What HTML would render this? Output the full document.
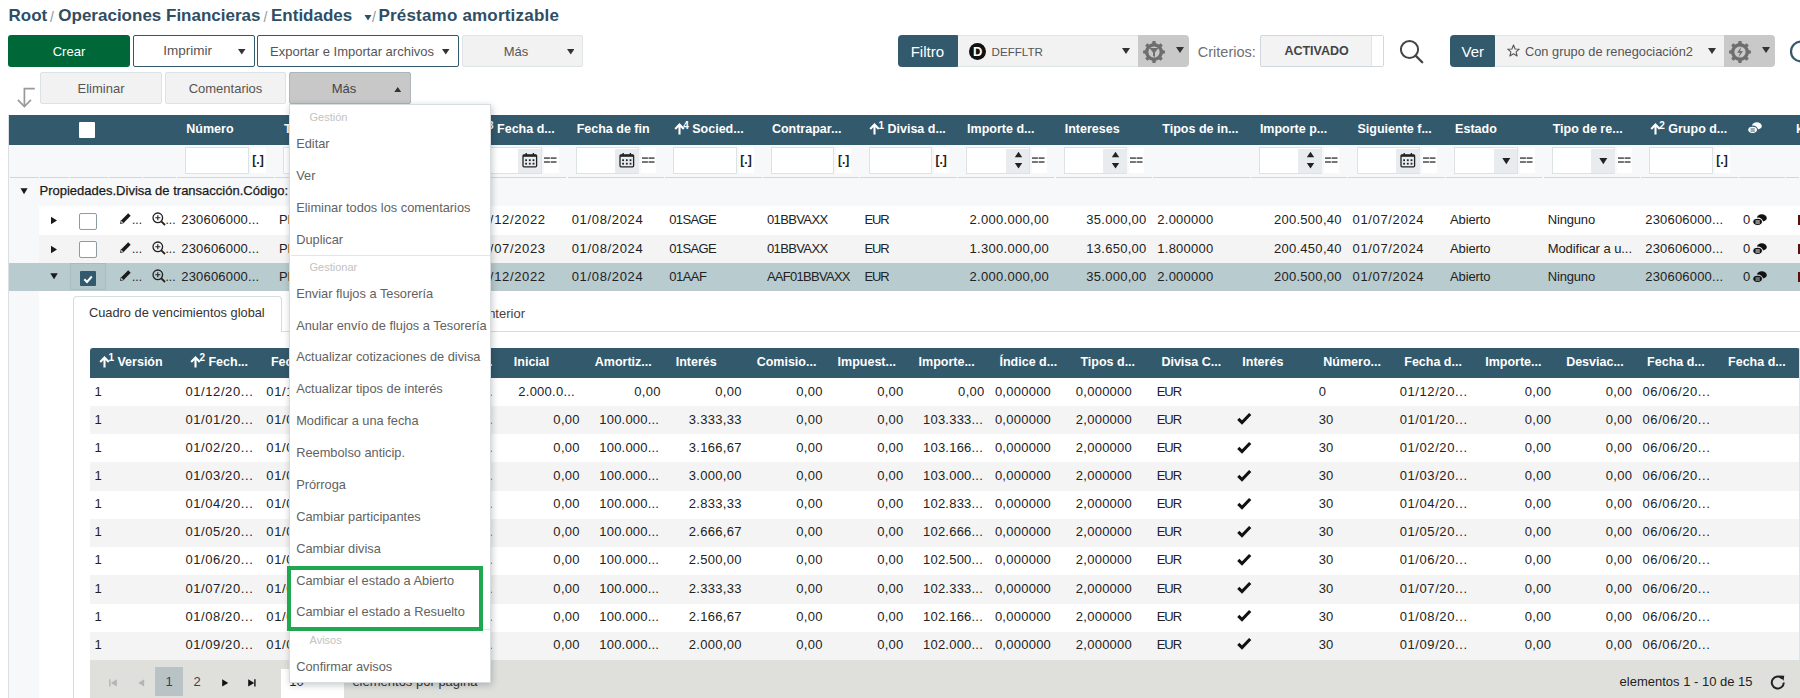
<!DOCTYPE html>
<html><head><meta charset="utf-8"><style>
html,body{margin:0;padding:0;}
body{width:1800px;height:698px;overflow:hidden;position:relative;background:#fff;font-family:"Liberation Sans", sans-serif;}
</style></head><body>
<div style="position:absolute;left:8.5px;top:7.11px;font-size:17px;line-height:17px;font-weight:bold;color:#2f4e63;white-space:pre;">Root</div>
<div style="position:absolute;left:50px;top:9.65px;font-size:14px;line-height:14px;font-weight:normal;color:#8a99a3;white-space:pre;">/</div>
<div style="position:absolute;left:58.3px;top:7.11px;font-size:17px;line-height:17px;font-weight:bold;color:#2f4e63;white-space:pre;">Operaciones Financieras</div>
<div style="position:absolute;left:263.5px;top:9.65px;font-size:14px;line-height:14px;font-weight:normal;color:#8a99a3;white-space:pre;">/</div>
<div style="position:absolute;left:271px;top:7.11px;font-size:17px;line-height:17px;font-weight:bold;color:#2f4e63;white-space:pre;">Entidades</div>
<svg style="position:absolute;left:364px;top:13.5px;" width="8" height="7" viewBox="0 0 8 7"><path d="M0.5 1 L7.5 1 L4 6.5 Z" fill="#2f4e63"/></svg>
<div style="position:absolute;left:372px;top:9.65px;font-size:14px;line-height:14px;font-weight:normal;color:#8a99a3;white-space:pre;">/</div>
<div style="position:absolute;left:378.4px;top:7.11px;font-size:17px;line-height:17px;font-weight:bold;color:#2f4e63;white-space:pre;letter-spacing:0.2px">Préstamo amortizable</div>
<div style="position:absolute;left:8px;top:35px;width:122px;height:32px;box-sizing:border-box;background:#006838;border:none;border-radius:3px"></div>
<div style="position:absolute;left:-131px;width:400px;top:44.50px;font-size:13px;line-height:13px;font-weight:normal;color:#fff;white-space:pre;text-align:center;">Crear</div>
<div style="position:absolute;left:133px;top:35px;width:121.5px;height:32px;box-sizing:border-box;background:#fff;border:1.5px solid #33596d;border-radius:2px"></div>
<div style="position:absolute;left:163.3px;top:44.07px;font-size:13.5px;line-height:13.5px;font-weight:normal;color:#555;white-space:pre;">Imprimir</div>
<svg style="position:absolute;left:238px;top:49px;" width="7.5" height="5.5" viewBox="0 0 7.5 5.5"><path d="M0 0 L7.5 0 L3.75 5.5 Z" fill="#333"/></svg>
<div style="position:absolute;left:257px;top:35px;width:202px;height:32px;box-sizing:border-box;background:#fff;border:1.5px solid #33596d;border-radius:2px"></div>
<div style="position:absolute;left:270px;top:44.50px;font-size:13px;line-height:13px;font-weight:normal;color:#555;white-space:pre;">Exportar e Importar archivos</div>
<svg style="position:absolute;left:442px;top:49px;" width="7.5" height="5.5" viewBox="0 0 7.5 5.5"><path d="M0 0 L7.5 0 L3.75 5.5 Z" fill="#333"/></svg>
<div style="position:absolute;left:462px;top:35px;width:121px;height:32px;box-sizing:border-box;background:#f2f2f2;border:1px solid #dfe4e6;border-radius:2px"></div>
<div style="position:absolute;left:316px;width:400px;top:44.50px;font-size:13px;line-height:13px;font-weight:normal;color:#555;white-space:pre;text-align:center;">Más</div>
<svg style="position:absolute;left:566.5px;top:49px;" width="7.5" height="5.5" viewBox="0 0 7.5 5.5"><path d="M0 0 L7.5 0 L3.75 5.5 Z" fill="#333"/></svg>
<div style="position:absolute;left:898px;top:35px;width:62px;height:32px;box-sizing:border-box;background:#33596d;border:none;border-radius:4px"></div>
<div style="position:absolute;left:910.7px;top:44.30px;font-size:15px;line-height:15px;font-weight:normal;color:#fff;white-space:pre;">Filtro</div>
<div style="position:absolute;left:958px;top:35px;width:181px;height:32px;box-sizing:border-box;background:#f2f2f2;border:1px solid #dfe4e6;border-left:none"></div>
<svg style="position:absolute;left:968px;top:42px;" width="19" height="19" viewBox="0 0 19 19"><circle cx="9.5" cy="9.5" r="8.5" fill="#111"/><text x="9.6" y="14.3" font-family="Liberation Sans" font-size="13" font-weight="bold" fill="#fff" text-anchor="middle">D</text></svg>
<div style="position:absolute;left:991.6px;top:46.48px;font-size:11.6px;line-height:11.6px;font-weight:normal;color:#555;white-space:pre;">DEFFLTR</div>
<svg style="position:absolute;left:1121.5px;top:48px;" width="8" height="6" viewBox="0 0 8 6"><path d="M0 0 L8 0 L4.0 6 Z" fill="#333"/></svg>
<div style="position:absolute;left:1138px;top:35px;width:51px;height:32px;box-sizing:border-box;background:#c9c9c9;border-radius:0 4px 4px 0"></div>
<svg style="position:absolute;left:1141px;top:39px;" width="26" height="26" viewBox="0 0 26 26"><path d="M21.10 11.19 L23.89 11.47 L23.89 14.53 L21.10 14.81 L20.01 17.45 L21.79 19.62 L19.62 21.79 L17.45 20.01 L14.81 21.10 L14.53 23.89 L11.47 23.89 L11.19 21.10 L8.55 20.01 L6.38 21.79 L4.21 19.62 L5.99 17.45 L4.90 14.81 L2.11 14.53 L2.11 11.47 L4.90 11.19 L5.99 8.55 L4.21 6.38 L6.38 4.21 L8.55 5.99 L11.19 4.90 L11.47 2.11 L14.53 2.11 L14.81 4.90 L17.45 5.99 L19.62 4.21 L21.79 6.38 L20.01 8.55 Z" fill="#6e6e6e"/><circle cx="13" cy="13" r="9" fill="#6e6e6e"/><circle cx="13" cy="13" r="5.6" fill="#c9c9c9"/><path d="M8.5 9 L17.5 9 L14 13.5 L14 18 L12 17 L12 13.5 Z" fill="#6e6e6e"/></svg>
<svg style="position:absolute;left:1176px;top:47px;" width="8" height="6" viewBox="0 0 8 6"><path d="M0 0 L8 0 L4.0 6 Z" fill="#333"/></svg>
<div style="position:absolute;left:1197.8px;top:44.73px;font-size:14.5px;line-height:14.5px;font-weight:normal;color:#707070;white-space:pre;">Criterios:</div>
<div style="position:absolute;left:1260px;top:35px;width:124px;height:32px;box-sizing:border-box;background:#f3f3f3;border:1px solid #cfd8dc;border-radius:2px"></div>
<div style="position:absolute;left:1371px;top:36px;width:11px;height:30px;background:#fff;border-left:1px solid #dfe4e6"></div>
<div style="position:absolute;left:1284.4px;top:45.22px;font-size:12.5px;line-height:12.5px;font-weight:bold;color:#444;white-space:pre;">ACTIVADO</div>
<svg style="position:absolute;left:1398px;top:38px;" width="28" height="28" viewBox="0 0 28 28"><circle cx="11.5" cy="11.5" r="8.6" fill="none" stroke="#444" stroke-width="2"/><path d="M17.6 17.6 L24.2 24.2" stroke="#444" stroke-width="2.3" stroke-linecap="round"/></svg>
<div style="position:absolute;left:1450px;top:35px;width:47px;height:32px;box-sizing:border-box;background:#33596d;border:none;border-radius:4px"></div>
<div style="position:absolute;left:1461.5px;top:44.30px;font-size:15px;line-height:15px;font-weight:normal;color:#fff;white-space:pre;">Ver</div>
<div style="position:absolute;left:1495px;top:35px;width:230px;height:32px;box-sizing:border-box;background:#f2f2f2;border:1px solid #dfe4e6;border-left:none"></div>
<svg style="position:absolute;left:1507px;top:44px;" width="14" height="14" viewBox="0 0 14 14"><path d="M6.5 1 L8.1 5 L12.3 5.2 L9.1 7.9 L10.1 12 L6.5 9.8 L2.9 12 L3.9 7.9 L0.7 5.2 L4.9 5 Z" fill="none" stroke="#555" stroke-width="1.1" stroke-linejoin="round"/></svg>
<div style="position:absolute;left:1525px;top:45.96px;font-size:12.8px;line-height:12.8px;font-weight:normal;color:#555;white-space:pre;">Con grupo de renegociación2</div>
<svg style="position:absolute;left:1708px;top:48px;" width="8" height="6" viewBox="0 0 8 6"><path d="M0 0 L8 0 L4.0 6 Z" fill="#333"/></svg>
<div style="position:absolute;left:1724px;top:35px;width:51px;height:32px;box-sizing:border-box;background:#c9c9c9;border-radius:0 4px 4px 0"></div>
<svg style="position:absolute;left:1727px;top:39px;" width="26" height="26" viewBox="0 0 26 26"><path d="M21.10 11.19 L23.89 11.47 L23.89 14.53 L21.10 14.81 L20.01 17.45 L21.79 19.62 L19.62 21.79 L17.45 20.01 L14.81 21.10 L14.53 23.89 L11.47 23.89 L11.19 21.10 L8.55 20.01 L6.38 21.79 L4.21 19.62 L5.99 17.45 L4.90 14.81 L2.11 14.53 L2.11 11.47 L4.90 11.19 L5.99 8.55 L4.21 6.38 L6.38 4.21 L8.55 5.99 L11.19 4.90 L11.47 2.11 L14.53 2.11 L14.81 4.90 L17.45 5.99 L19.62 4.21 L21.79 6.38 L20.01 8.55 Z" fill="#6e6e6e"/><circle cx="13" cy="13" r="9" fill="#6e6e6e"/><circle cx="13" cy="13" r="5.6" fill="#c9c9c9"/><path d="M14.5 7.5 L10 13.8 L13 13.8 L11.5 18.5 L16 12 L13 12 Z" fill="#6e6e6e"/></svg>
<svg style="position:absolute;left:1762px;top:47px;" width="8" height="6" viewBox="0 0 8 6"><path d="M0 0 L8 0 L4.0 6 Z" fill="#333"/></svg>
<svg style="position:absolute;left:1787.5px;top:40px;" width="13" height="24" viewBox="0 0 13 24"><circle cx="13" cy="11.5" r="10" fill="none" stroke="#33596d" stroke-width="2.2"/></svg>
<svg style="position:absolute;left:15px;top:85px;" width="22" height="24" viewBox="0 0 22 24"><path d="M19.8 3.7 L9.4 3.7 L9.4 21" fill="none" stroke="#999" stroke-width="1.7"/><path d="M2.9 14.8 L9.4 21.5 L15.9 14.8" fill="none" stroke="#999" stroke-width="1.7"/></svg>
<div style="position:absolute;left:40px;top:72px;width:122px;height:32px;box-sizing:border-box;background:#f2f2f2;border:1px solid #dbe3e6;border-radius:2px"></div>
<div style="position:absolute;left:-99px;width:400px;top:81.50px;font-size:13px;line-height:13px;font-weight:normal;color:#555;white-space:pre;text-align:center;">Eliminar</div>
<div style="position:absolute;left:165px;top:72px;width:121px;height:32px;box-sizing:border-box;background:#f2f2f2;border:1px solid #dbe3e6;border-radius:2px"></div>
<div style="position:absolute;left:25.5px;width:400px;top:81.50px;font-size:13px;line-height:13px;font-weight:normal;color:#555;white-space:pre;text-align:center;">Comentarios</div>
<div style="position:absolute;left:289px;top:72px;width:122px;height:32px;box-sizing:border-box;background:#c8c8c8;border:1px solid #aab6ba;border-radius:2px"></div>
<div style="position:absolute;left:144px;width:400px;top:81.50px;font-size:13px;line-height:13px;font-weight:normal;color:#444;white-space:pre;text-align:center;">Más</div>
<svg style="position:absolute;left:394.2px;top:86.5px;" width="7.5" height="5.5" viewBox="0 0 7.5 5.5"><path d="M0 5.5 L7.5 5.5 L3.75 0 Z" fill="#333"/></svg>
<!-- main table -->
<div style="position:absolute;left:8px;top:115px;width:1792px;height:1px;background:#dde3e6"></div>
<div style="position:absolute;left:8px;top:115px;width:1792px;height:30px;background:#33596d"></div>
<div style="position:absolute;left:8px;top:145px;width:1792px;height:33px;background:#f7f8fa"></div>
<div style="position:absolute;left:8px;top:178px;width:1792px;height:28px;background:#f7f8fa"></div>
<div style="position:absolute;left:9px;top:178px;width:30px;height:520px;background:#f7f8fa"></div>
<div style="position:absolute;left:8px;top:115px;width:1px;height:583px;background:#d9dfe3"></div>
<div style="position:absolute;left:9.5px;top:177px;width:29.299999999999997px;height:1px;background:#cfd8dc"></div>
<div style="position:absolute;left:39.8px;top:177px;width:29.400000000000006px;height:1px;background:#cfd8dc"></div>
<div style="position:absolute;left:70.2px;top:177px;width:37.599999999999994px;height:1px;background:#cfd8dc"></div>
<div style="position:absolute;left:108.8px;top:177px;width:33.2px;height:1px;background:#cfd8dc"></div>
<div style="position:absolute;left:143.0px;top:177px;width:32.80000000000001px;height:1px;background:#cfd8dc"></div>
<div style="position:absolute;left:176.8px;top:177px;width:96.89999999999998px;height:1px;background:#cfd8dc"></div>
<div style="position:absolute;left:274.7px;top:177px;width:96.60000000000002px;height:1px;background:#cfd8dc"></div>
<div style="position:absolute;left:372.3px;top:177px;width:96.59999999999997px;height:1px;background:#cfd8dc"></div>
<div style="position:absolute;left:469.9px;top:177px;width:96.60000000000002px;height:1px;background:#cfd8dc"></div>
<div style="position:absolute;left:567.5px;top:177px;width:96.60000000000002px;height:1px;background:#cfd8dc"></div>
<div style="position:absolute;left:665.1px;top:177px;width:96.60000000000002px;height:1px;background:#cfd8dc"></div>
<div style="position:absolute;left:762.7px;top:177px;width:96.59999999999991px;height:1px;background:#cfd8dc"></div>
<div style="position:absolute;left:860.3px;top:177px;width:96.60000000000002px;height:1px;background:#cfd8dc"></div>
<div style="position:absolute;left:957.9px;top:177px;width:96.60000000000002px;height:1px;background:#cfd8dc"></div>
<div style="position:absolute;left:1055.5px;top:177px;width:96.59999999999991px;height:1px;background:#cfd8dc"></div>
<div style="position:absolute;left:1153.1px;top:177px;width:96.60000000000014px;height:1px;background:#cfd8dc"></div>
<div style="position:absolute;left:1250.7px;top:177px;width:96.59999999999991px;height:1px;background:#cfd8dc"></div>
<div style="position:absolute;left:1348.3px;top:177px;width:96.60000000000014px;height:1px;background:#cfd8dc"></div>
<div style="position:absolute;left:1445.9px;top:177px;width:96.59999999999991px;height:1px;background:#cfd8dc"></div>
<div style="position:absolute;left:1543.5px;top:177px;width:96.59999999999991px;height:1px;background:#cfd8dc"></div>
<div style="position:absolute;left:1641.1px;top:177px;width:96.60000000000014px;height:1px;background:#cfd8dc"></div>
<div style="position:absolute;left:1738.7px;top:177px;width:46.399999999999864px;height:1px;background:#cfd8dc"></div>
<div style="position:absolute;left:1786.1px;top:177px;width:13.400000000000091px;height:1px;background:#cfd8dc"></div>
<div style="position:absolute;left:79px;top:122px;width:16px;height:16px;background:#fff;border-radius:1px"></div>
<div style="position:absolute;left:186.3px;top:123.22px;font-size:12.5px;line-height:12.5px;font-weight:bold;color:#fff;white-space:pre;">Número</div>
<div style="position:absolute;left:283.9px;top:123.22px;font-size:12.5px;line-height:12.5px;font-weight:bold;color:#fff;white-space:pre;">Tipo...</div>
<div style="position:absolute;left:381.5px;top:123.22px;font-size:12.5px;line-height:12.5px;font-weight:bold;color:#fff;white-space:pre;">Nombre...</div>
<svg style="position:absolute;left:478.59999999999997px;top:123.30000000000001px;" width="11" height="12" viewBox="0 0 11 12"><path d="M5.5 11.5 L5.5 2 M1.2 6 L5.5 1.5 L9.8 6" fill="none" stroke="#fff" stroke-width="2.1"/></svg>
<div style="position:absolute;left:488.09999999999997px;top:120.84px;font-size:10px;line-height:10px;font-weight:bold;color:#fff;white-space:pre;">3</div>
<div style="position:absolute;left:493.59999999999997px;top:123.22px;font-size:12.5px;line-height:12.5px;font-weight:bold;color:#fff;white-space:pre;"> Fecha d...</div>
<div style="position:absolute;left:576.7px;top:123.22px;font-size:12.5px;line-height:12.5px;font-weight:bold;color:#fff;white-space:pre;">Fecha de fin</div>
<svg style="position:absolute;left:673.8px;top:123.30000000000001px;" width="11" height="12" viewBox="0 0 11 12"><path d="M5.5 11.5 L5.5 2 M1.2 6 L5.5 1.5 L9.8 6" fill="none" stroke="#fff" stroke-width="2.1"/></svg>
<div style="position:absolute;left:683.3px;top:120.84px;font-size:10px;line-height:10px;font-weight:bold;color:#fff;white-space:pre;">4</div>
<div style="position:absolute;left:688.8px;top:123.22px;font-size:12.5px;line-height:12.5px;font-weight:bold;color:#fff;white-space:pre;"> Socied...</div>
<div style="position:absolute;left:771.8999999999999px;top:123.22px;font-size:12.5px;line-height:12.5px;font-weight:bold;color:#fff;white-space:pre;">Contrapar...</div>
<svg style="position:absolute;left:869.0px;top:123.30000000000001px;" width="11" height="12" viewBox="0 0 11 12"><path d="M5.5 11.5 L5.5 2 M1.2 6 L5.5 1.5 L9.8 6" fill="none" stroke="#fff" stroke-width="2.1"/></svg>
<div style="position:absolute;left:878.5px;top:120.84px;font-size:10px;line-height:10px;font-weight:bold;color:#fff;white-space:pre;">1</div>
<div style="position:absolute;left:884.0px;top:123.22px;font-size:12.5px;line-height:12.5px;font-weight:bold;color:#fff;white-space:pre;"> Divisa d...</div>
<div style="position:absolute;left:967.0999999999999px;top:123.22px;font-size:12.5px;line-height:12.5px;font-weight:bold;color:#fff;white-space:pre;">Importe d...</div>
<div style="position:absolute;left:1064.7px;top:123.22px;font-size:12.5px;line-height:12.5px;font-weight:bold;color:#fff;white-space:pre;">Intereses</div>
<div style="position:absolute;left:1162.3px;top:123.22px;font-size:12.5px;line-height:12.5px;font-weight:bold;color:#fff;white-space:pre;">Tipos de in...</div>
<div style="position:absolute;left:1259.8999999999999px;top:123.22px;font-size:12.5px;line-height:12.5px;font-weight:bold;color:#fff;white-space:pre;">Importe p...</div>
<div style="position:absolute;left:1357.4999999999998px;top:123.22px;font-size:12.5px;line-height:12.5px;font-weight:bold;color:#fff;white-space:pre;">Siguiente f...</div>
<div style="position:absolute;left:1455.1px;top:123.22px;font-size:12.5px;line-height:12.5px;font-weight:bold;color:#fff;white-space:pre;">Estado</div>
<div style="position:absolute;left:1552.6999999999998px;top:123.22px;font-size:12.5px;line-height:12.5px;font-weight:bold;color:#fff;white-space:pre;">Tipo de re...</div>
<svg style="position:absolute;left:1649.8px;top:123.30000000000001px;" width="11" height="12" viewBox="0 0 11 12"><path d="M5.5 11.5 L5.5 2 M1.2 6 L5.5 1.5 L9.8 6" fill="none" stroke="#fff" stroke-width="2.1"/></svg>
<div style="position:absolute;left:1659.3px;top:120.84px;font-size:10px;line-height:10px;font-weight:bold;color:#fff;white-space:pre;">2</div>
<div style="position:absolute;left:1664.8px;top:123.22px;font-size:12.5px;line-height:12.5px;font-weight:bold;color:#fff;white-space:pre;"> Grupo d...</div>
<svg style="position:absolute;left:1747px;top:121px;" width="16" height="14" viewBox="0 0 16 14"><ellipse cx="9.8" cy="5" rx="5" ry="3.7" fill="#fff"/><ellipse cx="5.6" cy="8.8" rx="4.9" ry="3.7" fill="#fff" stroke="#33596d" stroke-width="1.1"/><path d="M3.5 8 L7.8 8 M3.5 10 L7.8 10" stroke="#33596d" stroke-width="1"/></svg>
<div style="position:absolute;left:1796px;top:123.22px;font-size:12.5px;line-height:12.5px;font-weight:bold;color:#fff;white-space:pre;">k</div>
<div style="position:absolute;left:185.3px;top:147px;width:63.5px;height:26.8px;box-sizing:border-box;background:#fff;border:1px solid #dde2e5"></div>
<div style="position:absolute;left:250.8px;top:148px;width:15px;height:25px;background:#fff"></div>
<div style="position:absolute;left:252.3px;top:153.64px;font-size:12px;line-height:12px;font-weight:bold;color:#222;white-space:pre;">[.]</div>
<div style="position:absolute;left:282.9px;top:147px;width:63.5px;height:26.8px;box-sizing:border-box;background:#fff;border:1px solid #dde2e5"></div>
<div style="position:absolute;left:348.4px;top:148px;width:15px;height:25px;background:#fff"></div>
<div style="position:absolute;left:349.9px;top:153.64px;font-size:12px;line-height:12px;font-weight:bold;color:#222;white-space:pre;">[.]</div>
<div style="position:absolute;left:380.5px;top:147px;width:63.5px;height:26.8px;box-sizing:border-box;background:#fff;border:1px solid #dde2e5"></div>
<div style="position:absolute;left:446.0px;top:148px;width:15px;height:25px;background:#fff"></div>
<div style="position:absolute;left:447.5px;top:153.64px;font-size:12px;line-height:12px;font-weight:bold;color:#222;white-space:pre;">[.]</div>
<div style="position:absolute;left:478.09999999999997px;top:147px;width:63.5px;height:26.8px;box-sizing:border-box;background:#fff;border:1px solid #dde2e5"></div>
<div style="position:absolute;left:517.5999999999999px;top:148.5px;width:23.5px;height:24px;background:#e9ecee"></div>
<svg style="position:absolute;left:521.5999999999999px;top:152px;" width="16" height="16" viewBox="0 0 16 16"><rect x="1" y="2.8" width="13.6" height="12" rx="1" fill="none" stroke="#222" stroke-width="1.3"/><rect x="1" y="2.8" width="13.6" height="2" fill="#222"/><path d="M4.2 1 L4.2 4 M11.4 1 L11.4 4" stroke="#222" stroke-width="1.4"/><g fill="#222"><rect x="3.2" y="7.3" width="1.8" height="1.8"/><rect x="6.9" y="7.3" width="1.8" height="1.8"/><rect x="10.6" y="7.3" width="1.8" height="1.8"/><rect x="3.2" y="10.8" width="1.8" height="1.8"/><rect x="6.9" y="10.8" width="1.8" height="1.8"/><rect x="10.6" y="10.8" width="1.8" height="1.8"/></g></svg>
<div style="position:absolute;left:543.5999999999999px;top:148px;width:15px;height:25px;background:#fff"></div>
<svg style="position:absolute;left:544.3999999999999px;top:156px;" width="13" height="9" viewBox="0 0 13 9"><g fill="#555"><rect x="0" y="1.3" width="5.9" height="1.6"/><rect x="6.6" y="1.3" width="5.9" height="1.6"/><rect x="0" y="5.2" width="5.9" height="1.6"/><rect x="6.6" y="5.2" width="5.9" height="1.6"/></g></svg>
<div style="position:absolute;left:575.7px;top:147px;width:63.5px;height:26.8px;box-sizing:border-box;background:#fff;border:1px solid #dde2e5"></div>
<div style="position:absolute;left:615.2px;top:148.5px;width:23.5px;height:24px;background:#e9ecee"></div>
<svg style="position:absolute;left:619.2px;top:152px;" width="16" height="16" viewBox="0 0 16 16"><rect x="1" y="2.8" width="13.6" height="12" rx="1" fill="none" stroke="#222" stroke-width="1.3"/><rect x="1" y="2.8" width="13.6" height="2" fill="#222"/><path d="M4.2 1 L4.2 4 M11.4 1 L11.4 4" stroke="#222" stroke-width="1.4"/><g fill="#222"><rect x="3.2" y="7.3" width="1.8" height="1.8"/><rect x="6.9" y="7.3" width="1.8" height="1.8"/><rect x="10.6" y="7.3" width="1.8" height="1.8"/><rect x="3.2" y="10.8" width="1.8" height="1.8"/><rect x="6.9" y="10.8" width="1.8" height="1.8"/><rect x="10.6" y="10.8" width="1.8" height="1.8"/></g></svg>
<div style="position:absolute;left:641.2px;top:148px;width:15px;height:25px;background:#fff"></div>
<svg style="position:absolute;left:642.0px;top:156px;" width="13" height="9" viewBox="0 0 13 9"><g fill="#555"><rect x="0" y="1.3" width="5.9" height="1.6"/><rect x="6.6" y="1.3" width="5.9" height="1.6"/><rect x="0" y="5.2" width="5.9" height="1.6"/><rect x="6.6" y="5.2" width="5.9" height="1.6"/></g></svg>
<div style="position:absolute;left:673.3px;top:147px;width:63.5px;height:26.8px;box-sizing:border-box;background:#fff;border:1px solid #dde2e5"></div>
<div style="position:absolute;left:738.8px;top:148px;width:15px;height:25px;background:#fff"></div>
<div style="position:absolute;left:740.3px;top:153.64px;font-size:12px;line-height:12px;font-weight:bold;color:#222;white-space:pre;">[.]</div>
<div style="position:absolute;left:770.8999999999999px;top:147px;width:63.5px;height:26.8px;box-sizing:border-box;background:#fff;border:1px solid #dde2e5"></div>
<div style="position:absolute;left:836.3999999999999px;top:148px;width:15px;height:25px;background:#fff"></div>
<div style="position:absolute;left:837.8999999999999px;top:153.64px;font-size:12px;line-height:12px;font-weight:bold;color:#222;white-space:pre;">[.]</div>
<div style="position:absolute;left:868.5px;top:147px;width:63.5px;height:26.8px;box-sizing:border-box;background:#fff;border:1px solid #dde2e5"></div>
<div style="position:absolute;left:934.0px;top:148px;width:15px;height:25px;background:#fff"></div>
<div style="position:absolute;left:935.5px;top:153.64px;font-size:12px;line-height:12px;font-weight:bold;color:#222;white-space:pre;">[.]</div>
<div style="position:absolute;left:966.0999999999999px;top:147px;width:63.5px;height:26.8px;box-sizing:border-box;background:#fff;border:1px solid #dde2e5"></div>
<div style="position:absolute;left:1005.5999999999999px;top:148.5px;width:23.5px;height:24px;background:#e9ecee"></div>
<svg style="position:absolute;left:1013.5999999999999px;top:151px;" width="9" height="19" viewBox="0 0 9 19"><path d="M0.8 6.3 L8.2 6.3 L4.5 0.8 Z M0.8 12 L8.2 12 L4.5 17.5 Z" fill="#222"/></svg>
<div style="position:absolute;left:1031.6px;top:148px;width:15px;height:25px;background:#fff"></div>
<svg style="position:absolute;left:1032.3999999999999px;top:156px;" width="13" height="9" viewBox="0 0 13 9"><g fill="#555"><rect x="0" y="1.3" width="5.9" height="1.6"/><rect x="6.6" y="1.3" width="5.9" height="1.6"/><rect x="0" y="5.2" width="5.9" height="1.6"/><rect x="6.6" y="5.2" width="5.9" height="1.6"/></g></svg>
<div style="position:absolute;left:1063.7px;top:147px;width:63.5px;height:26.8px;box-sizing:border-box;background:#fff;border:1px solid #dde2e5"></div>
<div style="position:absolute;left:1103.2px;top:148.5px;width:23.5px;height:24px;background:#e9ecee"></div>
<svg style="position:absolute;left:1111.2px;top:151px;" width="9" height="19" viewBox="0 0 9 19"><path d="M0.8 6.3 L8.2 6.3 L4.5 0.8 Z M0.8 12 L8.2 12 L4.5 17.5 Z" fill="#222"/></svg>
<div style="position:absolute;left:1129.2px;top:148px;width:15px;height:25px;background:#fff"></div>
<svg style="position:absolute;left:1130.0px;top:156px;" width="13" height="9" viewBox="0 0 13 9"><g fill="#555"><rect x="0" y="1.3" width="5.9" height="1.6"/><rect x="6.6" y="1.3" width="5.9" height="1.6"/><rect x="0" y="5.2" width="5.9" height="1.6"/><rect x="6.6" y="5.2" width="5.9" height="1.6"/></g></svg>
<div style="position:absolute;left:1258.8999999999999px;top:147px;width:63.5px;height:26.8px;box-sizing:border-box;background:#fff;border:1px solid #dde2e5"></div>
<div style="position:absolute;left:1298.3999999999999px;top:148.5px;width:23.5px;height:24px;background:#e9ecee"></div>
<svg style="position:absolute;left:1306.3999999999999px;top:151px;" width="9" height="19" viewBox="0 0 9 19"><path d="M0.8 6.3 L8.2 6.3 L4.5 0.8 Z M0.8 12 L8.2 12 L4.5 17.5 Z" fill="#222"/></svg>
<div style="position:absolute;left:1324.3999999999999px;top:148px;width:15px;height:25px;background:#fff"></div>
<svg style="position:absolute;left:1325.1999999999998px;top:156px;" width="13" height="9" viewBox="0 0 13 9"><g fill="#555"><rect x="0" y="1.3" width="5.9" height="1.6"/><rect x="6.6" y="1.3" width="5.9" height="1.6"/><rect x="0" y="5.2" width="5.9" height="1.6"/><rect x="6.6" y="5.2" width="5.9" height="1.6"/></g></svg>
<div style="position:absolute;left:1356.4999999999998px;top:147px;width:63.5px;height:26.8px;box-sizing:border-box;background:#fff;border:1px solid #dde2e5"></div>
<div style="position:absolute;left:1395.9999999999998px;top:148.5px;width:23.5px;height:24px;background:#e9ecee"></div>
<svg style="position:absolute;left:1399.9999999999998px;top:152px;" width="16" height="16" viewBox="0 0 16 16"><rect x="1" y="2.8" width="13.6" height="12" rx="1" fill="none" stroke="#222" stroke-width="1.3"/><rect x="1" y="2.8" width="13.6" height="2" fill="#222"/><path d="M4.2 1 L4.2 4 M11.4 1 L11.4 4" stroke="#222" stroke-width="1.4"/><g fill="#222"><rect x="3.2" y="7.3" width="1.8" height="1.8"/><rect x="6.9" y="7.3" width="1.8" height="1.8"/><rect x="10.6" y="7.3" width="1.8" height="1.8"/><rect x="3.2" y="10.8" width="1.8" height="1.8"/><rect x="6.9" y="10.8" width="1.8" height="1.8"/><rect x="10.6" y="10.8" width="1.8" height="1.8"/></g></svg>
<div style="position:absolute;left:1421.9999999999998px;top:148px;width:15px;height:25px;background:#fff"></div>
<svg style="position:absolute;left:1422.7999999999997px;top:156px;" width="13" height="9" viewBox="0 0 13 9"><g fill="#555"><rect x="0" y="1.3" width="5.9" height="1.6"/><rect x="6.6" y="1.3" width="5.9" height="1.6"/><rect x="0" y="5.2" width="5.9" height="1.6"/><rect x="6.6" y="5.2" width="5.9" height="1.6"/></g></svg>
<div style="position:absolute;left:1454.1px;top:147px;width:63.5px;height:26.8px;box-sizing:border-box;background:#fff;border:1px solid #dde2e5"></div>
<div style="position:absolute;left:1493.6px;top:148.5px;width:23.5px;height:24px;background:#e9ecee"></div>
<svg style="position:absolute;left:1501.6px;top:157.5px;" width="9" height="7" viewBox="0 0 9 7"><path d="M0.3 0 L8.3 0 L4.3 6.3 Z" fill="#222"/></svg>
<div style="position:absolute;left:1519.6px;top:148px;width:15px;height:25px;background:#fff"></div>
<svg style="position:absolute;left:1520.3999999999999px;top:156px;" width="13" height="9" viewBox="0 0 13 9"><g fill="#555"><rect x="0" y="1.3" width="5.9" height="1.6"/><rect x="6.6" y="1.3" width="5.9" height="1.6"/><rect x="0" y="5.2" width="5.9" height="1.6"/><rect x="6.6" y="5.2" width="5.9" height="1.6"/></g></svg>
<div style="position:absolute;left:1551.6999999999998px;top:147px;width:63.5px;height:26.8px;box-sizing:border-box;background:#fff;border:1px solid #dde2e5"></div>
<div style="position:absolute;left:1591.1999999999998px;top:148.5px;width:23.5px;height:24px;background:#e9ecee"></div>
<svg style="position:absolute;left:1599.1999999999998px;top:157.5px;" width="9" height="7" viewBox="0 0 9 7"><path d="M0.3 0 L8.3 0 L4.3 6.3 Z" fill="#222"/></svg>
<div style="position:absolute;left:1617.1999999999998px;top:148px;width:15px;height:25px;background:#fff"></div>
<svg style="position:absolute;left:1617.9999999999998px;top:156px;" width="13" height="9" viewBox="0 0 13 9"><g fill="#555"><rect x="0" y="1.3" width="5.9" height="1.6"/><rect x="6.6" y="1.3" width="5.9" height="1.6"/><rect x="0" y="5.2" width="5.9" height="1.6"/><rect x="6.6" y="5.2" width="5.9" height="1.6"/></g></svg>
<div style="position:absolute;left:1649.3px;top:147px;width:63.5px;height:26.8px;box-sizing:border-box;background:#fff;border:1px solid #dde2e5"></div>
<div style="position:absolute;left:1714.8px;top:148px;width:15px;height:25px;background:#fff"></div>
<div style="position:absolute;left:1716.3px;top:153.64px;font-size:12px;line-height:12px;font-weight:bold;color:#222;white-space:pre;">[.]</div>
<svg style="position:absolute;left:20px;top:188px;" width="8" height="7" viewBox="0 0 8 7"><path d="M0.5 0.3 L7.6 0.3 L4.05 6.2 Z" fill="#1a1a1a"/></svg>
<div style="position:absolute;left:39.5px;top:183.80px;font-size:13px;line-height:13px;font-weight:normal;color:#1a1a1a;white-space:pre;-webkit-text-stroke:0.25px #1a1a1a">Propiedades.Divisa de transacción.Código:</div>
<div style="position:absolute;left:39px;top:205.8px;width:1761px;height:29px;background:#fff"></div>
<svg style="position:absolute;left:50px;top:216.3px;" width="8" height="9" viewBox="0 0 8 9"><path d="M1 0.8 L7 4.55 L1 8.3 Z" fill="#1a1a1a"/></svg>
<div style="position:absolute;left:79px;top:213px;width:18px;height:17px;box-sizing:border-box;background:#fff;border:1.3px solid #8d9ca3;border-radius:2px"></div>
<svg style="position:absolute;left:119px;top:212.3px;" width="13" height="13" viewBox="0 0 13 13"><path d="M1.5 11.5 L2.3 8.2 L9.2 1.3 L11.7 3.8 L4.8 10.7 Z" fill="#1a1a1a"/><path d="M1.5 11.5 L2.3 8.2 L4.8 10.7 Z" fill="#fff" stroke="#1a1a1a" stroke-width="0.8"/></svg>
<div style="position:absolute;left:132px;top:214.14px;font-size:12px;line-height:12px;font-weight:normal;color:#222;white-space:pre;">...</div>
<svg style="position:absolute;left:151.5px;top:212.3px;" width="14" height="14" viewBox="0 0 14 14"><circle cx="5.8" cy="5.8" r="4.8" fill="none" stroke="#222" stroke-width="1.3"/><path d="M9.3 9.3 L13 13" stroke="#222" stroke-width="1.8"/><path d="M3.3 5.8 L8.3 5.8 M5.8 3.3 L5.8 8.3" stroke="#222" stroke-width="1.1"/></svg>
<div style="position:absolute;left:165.5px;top:214.14px;font-size:12px;line-height:12px;font-weight:normal;color:#222;white-space:pre;">...</div>
<div style="position:absolute;left:181.3px;top:213.30px;font-size:13px;line-height:13px;font-weight:normal;color:#222;white-space:pre;letter-spacing:0.179px">230606000...</div>
<div style="position:absolute;left:278.9px;top:213.30px;font-size:13px;line-height:13px;font-weight:normal;color:#222;white-space:pre;letter-spacing:-0.046px">PF...</div>
<div style="position:absolute;left:474.09999999999997px;top:213.30px;font-size:13px;line-height:13px;font-weight:normal;color:#222;white-space:pre;letter-spacing:0.660px">01/12/2022</div>
<div style="position:absolute;left:571.7px;top:213.30px;font-size:13px;line-height:13px;font-weight:normal;color:#222;white-space:pre;letter-spacing:0.660px">01/08/2024</div>
<div style="position:absolute;left:669.3px;top:213.30px;font-size:13px;line-height:13px;font-weight:normal;color:#222;white-space:pre;letter-spacing:-0.655px">01SAGE</div>
<div style="position:absolute;left:766.8999999999999px;top:213.30px;font-size:13px;line-height:13px;font-weight:normal;color:#222;white-space:pre;letter-spacing:-0.609px">01BBVAXX</div>
<div style="position:absolute;left:864.5px;top:213.30px;font-size:13px;line-height:13px;font-weight:normal;color:#222;white-space:pre;letter-spacing:-1.098px">EUR</div>
<div style="position:absolute;right:751.0081921875001px;top:213.30px;font-size:13px;line-height:13px;font-weight:normal;color:#222;white-space:pre;text-align:right;letter-spacing:0.292px">2.000.000,00</div>
<div style="position:absolute;right:653.4181229166668px;top:213.30px;font-size:13px;line-height:13px;font-weight:normal;color:#222;white-space:pre;text-align:right;letter-spacing:0.282px">35.000,00</div>
<div style="position:absolute;left:1157.3px;top:213.30px;font-size:13px;line-height:13px;font-weight:normal;color:#222;white-space:pre;letter-spacing:0.247px">2.000000</div>
<div style="position:absolute;right:458.2260675000002px;top:213.30px;font-size:13px;line-height:13px;font-weight:normal;color:#222;white-space:pre;text-align:right;letter-spacing:0.274px">200.500,40</div>
<div style="position:absolute;left:1352.4999999999998px;top:213.30px;font-size:13px;line-height:13px;font-weight:normal;color:#222;white-space:pre;letter-spacing:0.660px">01/07/2024</div>
<div style="position:absolute;left:1450.1px;top:213.30px;font-size:13px;line-height:13px;font-weight:normal;color:#222;white-space:pre;letter-spacing:-0.149px">Abierto</div>
<div style="position:absolute;left:1547.6999999999998px;top:213.30px;font-size:13px;line-height:13px;font-weight:normal;color:#222;white-space:pre;letter-spacing:-0.161px">Ninguno</div>
<div style="position:absolute;left:1645.3px;top:213.30px;font-size:13px;line-height:13px;font-weight:normal;color:#222;white-space:pre;letter-spacing:0.179px">230606000...</div>
<div style="position:absolute;left:1743px;top:213.30px;font-size:13px;line-height:13px;font-weight:normal;color:#222;white-space:pre;">0</div>
<svg style="position:absolute;left:1752px;top:213.3px;" width="16" height="14" viewBox="0 0 16 14"><ellipse cx="9.8" cy="5" rx="5" ry="3.7" fill="#111"/><ellipse cx="5.6" cy="8.8" rx="4.9" ry="3.7" fill="#111" stroke="#fff" stroke-width="1.1"/><path d="M3.5 8 L7.8 8 M3.5 10 L7.8 10" stroke="#fff" stroke-width="1"/></svg>
<div style="position:absolute;left:1798.3px;top:214.8px;width:1.7px;height:10px;background:#5a1010"></div>
<div style="position:absolute;left:39px;top:234.8px;width:1761px;height:27.9px;background:#f4f4f4"></div>
<svg style="position:absolute;left:50px;top:245.2px;" width="8" height="9" viewBox="0 0 8 9"><path d="M1 0.8 L7 4.55 L1 8.3 Z" fill="#1a1a1a"/></svg>
<div style="position:absolute;left:79px;top:241px;width:18px;height:17px;box-sizing:border-box;background:#fff;border:1.3px solid #8d9ca3;border-radius:2px"></div>
<svg style="position:absolute;left:119px;top:241.2px;" width="13" height="13" viewBox="0 0 13 13"><path d="M1.5 11.5 L2.3 8.2 L9.2 1.3 L11.7 3.8 L4.8 10.7 Z" fill="#1a1a1a"/><path d="M1.5 11.5 L2.3 8.2 L4.8 10.7 Z" fill="#fff" stroke="#1a1a1a" stroke-width="0.8"/></svg>
<div style="position:absolute;left:132px;top:243.04px;font-size:12px;line-height:12px;font-weight:normal;color:#222;white-space:pre;">...</div>
<svg style="position:absolute;left:151.5px;top:241.2px;" width="14" height="14" viewBox="0 0 14 14"><circle cx="5.8" cy="5.8" r="4.8" fill="none" stroke="#222" stroke-width="1.3"/><path d="M9.3 9.3 L13 13" stroke="#222" stroke-width="1.8"/><path d="M3.3 5.8 L8.3 5.8 M5.8 3.3 L5.8 8.3" stroke="#222" stroke-width="1.1"/></svg>
<div style="position:absolute;left:165.5px;top:243.04px;font-size:12px;line-height:12px;font-weight:normal;color:#222;white-space:pre;">...</div>
<div style="position:absolute;left:181.3px;top:242.20px;font-size:13px;line-height:13px;font-weight:normal;color:#222;white-space:pre;letter-spacing:0.179px">230606000...</div>
<div style="position:absolute;left:278.9px;top:242.20px;font-size:13px;line-height:13px;font-weight:normal;color:#222;white-space:pre;letter-spacing:-0.046px">PF...</div>
<div style="position:absolute;left:474.09999999999997px;top:242.20px;font-size:13px;line-height:13px;font-weight:normal;color:#222;white-space:pre;letter-spacing:0.660px">01/07/2023</div>
<div style="position:absolute;left:571.7px;top:242.20px;font-size:13px;line-height:13px;font-weight:normal;color:#222;white-space:pre;letter-spacing:0.660px">01/08/2024</div>
<div style="position:absolute;left:669.3px;top:242.20px;font-size:13px;line-height:13px;font-weight:normal;color:#222;white-space:pre;letter-spacing:-0.655px">01SAGE</div>
<div style="position:absolute;left:766.8999999999999px;top:242.20px;font-size:13px;line-height:13px;font-weight:normal;color:#222;white-space:pre;letter-spacing:-0.609px">01BBVAXX</div>
<div style="position:absolute;left:864.5px;top:242.20px;font-size:13px;line-height:13px;font-weight:normal;color:#222;white-space:pre;letter-spacing:-1.098px">EUR</div>
<div style="position:absolute;right:751.0081921875001px;top:242.20px;font-size:13px;line-height:13px;font-weight:normal;color:#222;white-space:pre;text-align:right;letter-spacing:0.292px">1.300.000,00</div>
<div style="position:absolute;right:653.4181229166668px;top:242.20px;font-size:13px;line-height:13px;font-weight:normal;color:#222;white-space:pre;text-align:right;letter-spacing:0.282px">13.650,00</div>
<div style="position:absolute;left:1157.3px;top:242.20px;font-size:13px;line-height:13px;font-weight:normal;color:#222;white-space:pre;letter-spacing:0.247px">1.800000</div>
<div style="position:absolute;right:458.2260675000002px;top:242.20px;font-size:13px;line-height:13px;font-weight:normal;color:#222;white-space:pre;text-align:right;letter-spacing:0.274px">200.450,40</div>
<div style="position:absolute;left:1352.4999999999998px;top:242.20px;font-size:13px;line-height:13px;font-weight:normal;color:#222;white-space:pre;letter-spacing:0.660px">01/07/2024</div>
<div style="position:absolute;left:1450.1px;top:242.20px;font-size:13px;line-height:13px;font-weight:normal;color:#222;white-space:pre;letter-spacing:-0.149px">Abierto</div>
<div style="position:absolute;left:1547.6999999999998px;top:242.20px;font-size:13px;line-height:13px;font-weight:normal;color:#222;white-space:pre;letter-spacing:-0.061px">Modificar a u...</div>
<div style="position:absolute;left:1645.3px;top:242.20px;font-size:13px;line-height:13px;font-weight:normal;color:#222;white-space:pre;letter-spacing:0.179px">230606000...</div>
<div style="position:absolute;left:1743px;top:242.20px;font-size:13px;line-height:13px;font-weight:normal;color:#222;white-space:pre;">0</div>
<svg style="position:absolute;left:1752px;top:242.2px;" width="16" height="14" viewBox="0 0 16 14"><ellipse cx="9.8" cy="5" rx="5" ry="3.7" fill="#111"/><ellipse cx="5.6" cy="8.8" rx="4.9" ry="3.7" fill="#111" stroke="#f4f4f4" stroke-width="1.1"/><path d="M3.5 8 L7.8 8 M3.5 10 L7.8 10" stroke="#f4f4f4" stroke-width="1"/></svg>
<div style="position:absolute;left:1798.3px;top:243.7px;width:1.7px;height:10px;background:#5a1010"></div>
<div style="position:absolute;left:9px;top:262.7px;width:1791px;height:28px;background:#b8cbcf"></div>
<svg style="position:absolute;left:50px;top:273px;" width="8" height="7" viewBox="0 0 8 7"><path d="M0.3 0.2 L7.8 0.2 L4.05 6.2 Z" fill="#1a1a1a"/></svg>
<div style="position:absolute;left:70.3px;top:263.4px;width:35.6px;height:26.8px;box-sizing:border-box;border:1px solid #a9bdc1;background:#b4c7cb"></div>
<div style="position:absolute;left:79.6px;top:270.5px;width:16.6px;height:15.8px;background:#33596d;border-radius:1px"></div>
<svg style="position:absolute;left:82px;top:272.5px;" width="12" height="12" viewBox="0 0 12 12"><path d="M2.3 6.3 L5 9 L9.8 3.5" fill="none" stroke="#fff" stroke-width="2"/></svg>
<svg style="position:absolute;left:119px;top:269.2px;" width="13" height="13" viewBox="0 0 13 13"><path d="M1.5 11.5 L2.3 8.2 L9.2 1.3 L11.7 3.8 L4.8 10.7 Z" fill="#1a1a1a"/><path d="M1.5 11.5 L2.3 8.2 L4.8 10.7 Z" fill="#fff" stroke="#1a1a1a" stroke-width="0.8"/></svg>
<div style="position:absolute;left:132px;top:271.04px;font-size:12px;line-height:12px;font-weight:normal;color:#222;white-space:pre;">...</div>
<svg style="position:absolute;left:151.5px;top:269.2px;" width="14" height="14" viewBox="0 0 14 14"><circle cx="5.8" cy="5.8" r="4.8" fill="none" stroke="#222" stroke-width="1.3"/><path d="M9.3 9.3 L13 13" stroke="#222" stroke-width="1.8"/><path d="M3.3 5.8 L8.3 5.8 M5.8 3.3 L5.8 8.3" stroke="#222" stroke-width="1.1"/></svg>
<div style="position:absolute;left:165.5px;top:271.04px;font-size:12px;line-height:12px;font-weight:normal;color:#222;white-space:pre;">...</div>
<div style="position:absolute;left:181.3px;top:270.20px;font-size:13px;line-height:13px;font-weight:normal;color:#222;white-space:pre;letter-spacing:0.179px">230606000...</div>
<div style="position:absolute;left:278.9px;top:270.20px;font-size:13px;line-height:13px;font-weight:normal;color:#222;white-space:pre;letter-spacing:-0.046px">PF...</div>
<div style="position:absolute;left:474.09999999999997px;top:270.20px;font-size:13px;line-height:13px;font-weight:normal;color:#222;white-space:pre;letter-spacing:0.660px">01/12/2022</div>
<div style="position:absolute;left:571.7px;top:270.20px;font-size:13px;line-height:13px;font-weight:normal;color:#222;white-space:pre;letter-spacing:0.660px">01/08/2024</div>
<div style="position:absolute;left:669.3px;top:270.20px;font-size:13px;line-height:13px;font-weight:normal;color:#222;white-space:pre;letter-spacing:-0.526px">01AAF</div>
<div style="position:absolute;left:766.8999999999999px;top:270.20px;font-size:13px;line-height:13px;font-weight:normal;color:#222;white-space:pre;letter-spacing:-0.719px">AAF01BBVAXX</div>
<div style="position:absolute;left:864.5px;top:270.20px;font-size:13px;line-height:13px;font-weight:normal;color:#222;white-space:pre;letter-spacing:-1.098px">EUR</div>
<div style="position:absolute;right:751.0081921875001px;top:270.20px;font-size:13px;line-height:13px;font-weight:normal;color:#222;white-space:pre;text-align:right;letter-spacing:0.292px">2.000.000,00</div>
<div style="position:absolute;right:653.4181229166668px;top:270.20px;font-size:13px;line-height:13px;font-weight:normal;color:#222;white-space:pre;text-align:right;letter-spacing:0.282px">35.000,00</div>
<div style="position:absolute;left:1157.3px;top:270.20px;font-size:13px;line-height:13px;font-weight:normal;color:#222;white-space:pre;letter-spacing:0.247px">2.000000</div>
<div style="position:absolute;right:458.2260675000002px;top:270.20px;font-size:13px;line-height:13px;font-weight:normal;color:#222;white-space:pre;text-align:right;letter-spacing:0.274px">200.500,00</div>
<div style="position:absolute;left:1352.4999999999998px;top:270.20px;font-size:13px;line-height:13px;font-weight:normal;color:#222;white-space:pre;letter-spacing:0.660px">01/07/2024</div>
<div style="position:absolute;left:1450.1px;top:270.20px;font-size:13px;line-height:13px;font-weight:normal;color:#222;white-space:pre;letter-spacing:-0.149px">Abierto</div>
<div style="position:absolute;left:1547.6999999999998px;top:270.20px;font-size:13px;line-height:13px;font-weight:normal;color:#222;white-space:pre;letter-spacing:-0.161px">Ninguno</div>
<div style="position:absolute;left:1645.3px;top:270.20px;font-size:13px;line-height:13px;font-weight:normal;color:#222;white-space:pre;letter-spacing:0.179px">230606000...</div>
<div style="position:absolute;left:1743px;top:270.20px;font-size:13px;line-height:13px;font-weight:normal;color:#222;white-space:pre;">0</div>
<svg style="position:absolute;left:1752px;top:270.2px;" width="16" height="14" viewBox="0 0 16 14"><ellipse cx="9.8" cy="5" rx="5" ry="3.7" fill="#111"/><ellipse cx="5.6" cy="8.8" rx="4.9" ry="3.7" fill="#111" stroke="#b8cbcf" stroke-width="1.1"/><path d="M3.5 8 L7.8 8 M3.5 10 L7.8 10" stroke="#b8cbcf" stroke-width="1"/></svg>
<div style="position:absolute;left:1798.3px;top:271.7px;width:1.7px;height:10px;background:#5a1010"></div>
<!-- detail -->
<div style="position:absolute;left:39px;top:291px;width:1761px;height:407px;background:#fff"></div>
<div style="position:absolute;left:9px;top:291px;width:30px;height:407px;background:#f7f8fa"></div>
<div style="position:absolute;left:73px;top:310px;width:1px;height:388px;background:#d5dde1"></div>
<div style="position:absolute;left:73.5px;top:330.5px;width:1726.5px;height:1px;background:#d5dde1"></div>
<div style="position:absolute;left:73px;top:295.5px;width:208.5px;height:36px;box-sizing:border-box;background:#fff;border:1px solid #d5dde1;border-bottom:none;border-radius:4px 4px 0 0"></div>
<div style="position:absolute;left:89px;top:306.96px;font-size:12.8px;line-height:12.8px;font-weight:normal;color:#333;white-space:pre;">Cuadro de vencimientos global</div>
<div style="position:absolute;right:1275px;top:307.00px;font-size:13px;line-height:13px;font-weight:normal;color:#444;white-space:pre;text-align:right;">Cuadro de vencimientos anterior</div>
<div style="position:absolute;left:90px;top:348px;width:1709.5px;height:29.5px;background:#33596d;border-radius:3px 3px 0 0"></div>
<svg style="position:absolute;left:99px;top:355.8px;" width="11" height="12" viewBox="0 0 11 12"><path d="M5.5 11.5 L5.5 2 M1.2 6 L5.5 1.5 L9.8 6" fill="none" stroke="#fff" stroke-width="2.1"/></svg>
<div style="position:absolute;left:108.5px;top:353.34px;font-size:10px;line-height:10px;font-weight:bold;color:#fff;white-space:pre;">1</div>
<div style="position:absolute;left:114px;top:355.72px;font-size:12.5px;line-height:12.5px;font-weight:bold;color:#fff;white-space:pre;"> Versión</div>
<svg style="position:absolute;left:190.0px;top:355.8px;" width="11" height="12" viewBox="0 0 11 12"><path d="M5.5 11.5 L5.5 2 M1.2 6 L5.5 1.5 L9.8 6" fill="none" stroke="#fff" stroke-width="2.1"/></svg>
<div style="position:absolute;left:199.5px;top:353.34px;font-size:10px;line-height:10px;font-weight:bold;color:#fff;white-space:pre;">2</div>
<div style="position:absolute;left:205.0px;top:355.72px;font-size:12.5px;line-height:12.5px;font-weight:bold;color:#fff;white-space:pre;"> Fech...</div>
<div style="position:absolute;left:270.95px;top:355.72px;font-size:12.5px;line-height:12.5px;font-weight:bold;color:#fff;white-space:pre;">Fecha d...</div>
<div style="position:absolute;left:351.9px;top:355.72px;font-size:12.5px;line-height:12.5px;font-weight:bold;color:#fff;white-space:pre;">Fecha d...</div>
<div style="position:absolute;right:1307.5px;top:355.72px;font-size:12.5px;line-height:12.5px;font-weight:bold;color:#fff;white-space:pre;text-align:right;">Importe...</div>
<div style="position:absolute;left:513.8px;top:355.72px;font-size:12.5px;line-height:12.5px;font-weight:bold;color:#fff;white-space:pre;">Inicial</div>
<div style="position:absolute;left:594.75px;top:355.72px;font-size:12.5px;line-height:12.5px;font-weight:bold;color:#fff;white-space:pre;">Amortiz...</div>
<div style="position:absolute;left:675.7px;top:355.72px;font-size:12.5px;line-height:12.5px;font-weight:bold;color:#fff;white-space:pre;">Interés</div>
<div style="position:absolute;left:756.65px;top:355.72px;font-size:12.5px;line-height:12.5px;font-weight:bold;color:#fff;white-space:pre;">Comisio...</div>
<div style="position:absolute;left:837.6px;top:355.72px;font-size:12.5px;line-height:12.5px;font-weight:bold;color:#fff;white-space:pre;">Impuest...</div>
<div style="position:absolute;left:918.5500000000001px;top:355.72px;font-size:12.5px;line-height:12.5px;font-weight:bold;color:#fff;white-space:pre;">Importe...</div>
<div style="position:absolute;left:999.5px;top:355.72px;font-size:12.5px;line-height:12.5px;font-weight:bold;color:#fff;white-space:pre;">Índice d...</div>
<div style="position:absolute;left:1080.45px;top:355.72px;font-size:12.5px;line-height:12.5px;font-weight:bold;color:#fff;white-space:pre;">Tipos d...</div>
<div style="position:absolute;left:1161.4px;top:355.72px;font-size:12.5px;line-height:12.5px;font-weight:bold;color:#fff;white-space:pre;">Divisa C...</div>
<div style="position:absolute;left:1242.3500000000001px;top:355.72px;font-size:12.5px;line-height:12.5px;font-weight:bold;color:#fff;white-space:pre;">Interés</div>
<div style="position:absolute;left:1323.3px;top:355.72px;font-size:12.5px;line-height:12.5px;font-weight:bold;color:#fff;white-space:pre;">Número...</div>
<div style="position:absolute;left:1404.25px;top:355.72px;font-size:12.5px;line-height:12.5px;font-weight:bold;color:#fff;white-space:pre;">Fecha d...</div>
<div style="position:absolute;left:1485.2px;top:355.72px;font-size:12.5px;line-height:12.5px;font-weight:bold;color:#fff;white-space:pre;">Importe...</div>
<div style="position:absolute;left:1566.15px;top:355.72px;font-size:12.5px;line-height:12.5px;font-weight:bold;color:#fff;white-space:pre;">Desviac...</div>
<div style="position:absolute;left:1647.1000000000001px;top:355.72px;font-size:12.5px;line-height:12.5px;font-weight:bold;color:#fff;white-space:pre;">Fecha d...</div>
<div style="position:absolute;left:1728.05px;top:355.72px;font-size:12.5px;line-height:12.5px;font-weight:bold;color:#fff;white-space:pre;">Fecha d...</div>
<div style="position:absolute;left:90px;top:377.6px;width:1708.5px;height:28.74px;background:#fff"></div>
<div style="position:absolute;left:94.4px;top:384.80px;font-size:13px;line-height:13px;font-weight:normal;color:#222;white-space:pre;letter-spacing:0.202px">1</div>
<div style="position:absolute;left:185.4px;top:384.80px;font-size:13px;line-height:13px;font-weight:normal;color:#222;white-space:pre;letter-spacing:0.593px">01/12/20...</div>
<div style="position:absolute;left:266.34999999999997px;top:384.80px;font-size:13px;line-height:13px;font-weight:normal;color:#222;white-space:pre;letter-spacing:0.593px">01/12/20...</div>
<div style="position:absolute;left:347.29999999999995px;top:384.80px;font-size:13px;line-height:13px;font-weight:normal;color:#222;white-space:pre;letter-spacing:0.593px">01/12/20...</div>
<div style="position:absolute;right:1307.236772596154px;top:384.80px;font-size:13px;line-height:13px;font-weight:normal;color:#222;white-space:pre;text-align:right;letter-spacing:0.263px">2.000.000,...</div>
<div style="position:absolute;left:518.3px;top:384.80px;font-size:13px;line-height:13px;font-weight:normal;color:#222;white-space:pre;letter-spacing:0.246px">2.000.0...</div>
<div style="position:absolute;right:1139.2081921875001px;top:384.80px;font-size:13px;line-height:13px;font-weight:normal;color:#222;white-space:pre;text-align:right;letter-spacing:0.292px">0,00</div>
<div style="position:absolute;right:1058.2581921875px;top:384.80px;font-size:13px;line-height:13px;font-weight:normal;color:#222;white-space:pre;text-align:right;letter-spacing:0.292px">0,00</div>
<div style="position:absolute;right:977.3081921875px;top:384.80px;font-size:13px;line-height:13px;font-weight:normal;color:#222;white-space:pre;text-align:right;letter-spacing:0.292px">0,00</div>
<div style="position:absolute;right:896.3581921875px;top:384.80px;font-size:13px;line-height:13px;font-weight:normal;color:#222;white-space:pre;text-align:right;letter-spacing:0.292px">0,00</div>
<div style="position:absolute;right:815.4081921875px;top:384.80px;font-size:13px;line-height:13px;font-weight:normal;color:#222;white-space:pre;text-align:right;letter-spacing:0.292px">0,00</div>
<div style="position:absolute;left:994.9px;top:384.80px;font-size:13px;line-height:13px;font-weight:normal;color:#222;white-space:pre;letter-spacing:0.247px">0,000000</div>
<div style="position:absolute;left:1075.8500000000001px;top:384.80px;font-size:13px;line-height:13px;font-weight:normal;color:#222;white-space:pre;letter-spacing:0.247px">0,000000</div>
<div style="position:absolute;left:1156.8000000000002px;top:384.80px;font-size:13px;line-height:13px;font-weight:normal;color:#222;white-space:pre;letter-spacing:-1.098px">EUR</div>
<div style="position:absolute;left:1318.7px;top:384.80px;font-size:13px;line-height:13px;font-weight:normal;color:#222;white-space:pre;letter-spacing:0.202px">0</div>
<div style="position:absolute;left:1399.65px;top:384.80px;font-size:13px;line-height:13px;font-weight:normal;color:#222;white-space:pre;letter-spacing:0.593px">01/12/20...</div>
<div style="position:absolute;right:248.75819218749984px;top:384.80px;font-size:13px;line-height:13px;font-weight:normal;color:#222;white-space:pre;text-align:right;letter-spacing:0.292px">0,00</div>
<div style="position:absolute;right:167.8081921874998px;top:384.80px;font-size:13px;line-height:13px;font-weight:normal;color:#222;white-space:pre;text-align:right;letter-spacing:0.292px">0,00</div>
<div style="position:absolute;left:1642.5000000000002px;top:384.80px;font-size:13px;line-height:13px;font-weight:normal;color:#222;white-space:pre;letter-spacing:0.593px">06/06/20...</div>
<div style="position:absolute;left:90px;top:405.84000000000003px;width:1708.5px;height:28.74px;background:#f4f4f4"></div>
<div style="position:absolute;left:94.4px;top:412.90px;font-size:13px;line-height:13px;font-weight:normal;color:#222;white-space:pre;letter-spacing:0.202px">1</div>
<div style="position:absolute;left:185.4px;top:412.90px;font-size:13px;line-height:13px;font-weight:normal;color:#222;white-space:pre;letter-spacing:0.593px">01/01/20...</div>
<div style="position:absolute;left:266.34999999999997px;top:412.90px;font-size:13px;line-height:13px;font-weight:normal;color:#222;white-space:pre;letter-spacing:0.593px">01/01/20...</div>
<div style="position:absolute;left:347.29999999999995px;top:412.90px;font-size:13px;line-height:13px;font-weight:normal;color:#222;white-space:pre;letter-spacing:0.593px">01/12/20...</div>
<div style="position:absolute;right:1307.236772596154px;top:412.90px;font-size:13px;line-height:13px;font-weight:normal;color:#222;white-space:pre;text-align:right;letter-spacing:0.263px">2.000.000,...</div>
<div style="position:absolute;right:1220.1581921875px;top:412.90px;font-size:13px;line-height:13px;font-weight:normal;color:#222;white-space:pre;text-align:right;letter-spacing:0.292px">0,00</div>
<div style="position:absolute;left:599.25px;top:412.90px;font-size:13px;line-height:13px;font-weight:normal;color:#222;white-space:pre;letter-spacing:0.210px">100.000...</div>
<div style="position:absolute;right:1058.2581921875px;top:412.90px;font-size:13px;line-height:13px;font-weight:normal;color:#222;white-space:pre;text-align:right;letter-spacing:0.292px">3.333,33</div>
<div style="position:absolute;right:977.3081921875px;top:412.90px;font-size:13px;line-height:13px;font-weight:normal;color:#222;white-space:pre;text-align:right;letter-spacing:0.292px">0,00</div>
<div style="position:absolute;right:896.3581921875px;top:412.90px;font-size:13px;line-height:13px;font-weight:normal;color:#222;white-space:pre;text-align:right;letter-spacing:0.292px">0,00</div>
<div style="position:absolute;left:923.0500000000001px;top:412.90px;font-size:13px;line-height:13px;font-weight:normal;color:#222;white-space:pre;letter-spacing:0.210px">103.333...</div>
<div style="position:absolute;left:994.9px;top:412.90px;font-size:13px;line-height:13px;font-weight:normal;color:#222;white-space:pre;letter-spacing:0.247px">0,000000</div>
<div style="position:absolute;left:1075.8500000000001px;top:412.90px;font-size:13px;line-height:13px;font-weight:normal;color:#222;white-space:pre;letter-spacing:0.247px">2,000000</div>
<div style="position:absolute;left:1156.8000000000002px;top:412.90px;font-size:13px;line-height:13px;font-weight:normal;color:#222;white-space:pre;letter-spacing:-1.098px">EUR</div>
<div style="position:absolute;left:1318.7px;top:412.90px;font-size:13px;line-height:13px;font-weight:normal;color:#222;white-space:pre;letter-spacing:0.202px">30</div>
<div style="position:absolute;left:1399.65px;top:412.90px;font-size:13px;line-height:13px;font-weight:normal;color:#222;white-space:pre;letter-spacing:0.593px">01/01/20...</div>
<div style="position:absolute;right:248.75819218749984px;top:412.90px;font-size:13px;line-height:13px;font-weight:normal;color:#222;white-space:pre;text-align:right;letter-spacing:0.292px">0,00</div>
<div style="position:absolute;right:167.8081921874998px;top:412.90px;font-size:13px;line-height:13px;font-weight:normal;color:#222;white-space:pre;text-align:right;letter-spacing:0.292px">0,00</div>
<div style="position:absolute;left:1642.5000000000002px;top:412.90px;font-size:13px;line-height:13px;font-weight:normal;color:#222;white-space:pre;letter-spacing:0.593px">06/06/20...</div>
<svg style="position:absolute;left:1236.5px;top:412.40000000000003px;" width="15" height="13" viewBox="0 0 15 13"><path d="M1.3 6.8 L5 10.5 L13.2 2" fill="none" stroke="#111" stroke-width="3.1"/></svg>
<div style="position:absolute;left:90px;top:434.08000000000004px;width:1708.5px;height:28.74px;background:#fff"></div>
<div style="position:absolute;left:94.4px;top:441.00px;font-size:13px;line-height:13px;font-weight:normal;color:#222;white-space:pre;letter-spacing:0.202px">1</div>
<div style="position:absolute;left:185.4px;top:441.00px;font-size:13px;line-height:13px;font-weight:normal;color:#222;white-space:pre;letter-spacing:0.593px">01/02/20...</div>
<div style="position:absolute;left:266.34999999999997px;top:441.00px;font-size:13px;line-height:13px;font-weight:normal;color:#222;white-space:pre;letter-spacing:0.593px">01/02/20...</div>
<div style="position:absolute;left:347.29999999999995px;top:441.00px;font-size:13px;line-height:13px;font-weight:normal;color:#222;white-space:pre;letter-spacing:0.593px">01/12/20...</div>
<div style="position:absolute;right:1307.236772596154px;top:441.00px;font-size:13px;line-height:13px;font-weight:normal;color:#222;white-space:pre;text-align:right;letter-spacing:0.263px">2.000.000,...</div>
<div style="position:absolute;right:1220.1581921875px;top:441.00px;font-size:13px;line-height:13px;font-weight:normal;color:#222;white-space:pre;text-align:right;letter-spacing:0.292px">0,00</div>
<div style="position:absolute;left:599.25px;top:441.00px;font-size:13px;line-height:13px;font-weight:normal;color:#222;white-space:pre;letter-spacing:0.210px">100.000...</div>
<div style="position:absolute;right:1058.2581921875px;top:441.00px;font-size:13px;line-height:13px;font-weight:normal;color:#222;white-space:pre;text-align:right;letter-spacing:0.292px">3.166,67</div>
<div style="position:absolute;right:977.3081921875px;top:441.00px;font-size:13px;line-height:13px;font-weight:normal;color:#222;white-space:pre;text-align:right;letter-spacing:0.292px">0,00</div>
<div style="position:absolute;right:896.3581921875px;top:441.00px;font-size:13px;line-height:13px;font-weight:normal;color:#222;white-space:pre;text-align:right;letter-spacing:0.292px">0,00</div>
<div style="position:absolute;left:923.0500000000001px;top:441.00px;font-size:13px;line-height:13px;font-weight:normal;color:#222;white-space:pre;letter-spacing:0.210px">103.166...</div>
<div style="position:absolute;left:994.9px;top:441.00px;font-size:13px;line-height:13px;font-weight:normal;color:#222;white-space:pre;letter-spacing:0.247px">0,000000</div>
<div style="position:absolute;left:1075.8500000000001px;top:441.00px;font-size:13px;line-height:13px;font-weight:normal;color:#222;white-space:pre;letter-spacing:0.247px">2,000000</div>
<div style="position:absolute;left:1156.8000000000002px;top:441.00px;font-size:13px;line-height:13px;font-weight:normal;color:#222;white-space:pre;letter-spacing:-1.098px">EUR</div>
<div style="position:absolute;left:1318.7px;top:441.00px;font-size:13px;line-height:13px;font-weight:normal;color:#222;white-space:pre;letter-spacing:0.202px">30</div>
<div style="position:absolute;left:1399.65px;top:441.00px;font-size:13px;line-height:13px;font-weight:normal;color:#222;white-space:pre;letter-spacing:0.593px">01/02/20...</div>
<div style="position:absolute;right:248.75819218749984px;top:441.00px;font-size:13px;line-height:13px;font-weight:normal;color:#222;white-space:pre;text-align:right;letter-spacing:0.292px">0,00</div>
<div style="position:absolute;right:167.8081921874998px;top:441.00px;font-size:13px;line-height:13px;font-weight:normal;color:#222;white-space:pre;text-align:right;letter-spacing:0.292px">0,00</div>
<div style="position:absolute;left:1642.5000000000002px;top:441.00px;font-size:13px;line-height:13px;font-weight:normal;color:#222;white-space:pre;letter-spacing:0.593px">06/06/20...</div>
<svg style="position:absolute;left:1236.5px;top:440.5px;" width="15" height="13" viewBox="0 0 15 13"><path d="M1.3 6.8 L5 10.5 L13.2 2" fill="none" stroke="#111" stroke-width="3.1"/></svg>
<div style="position:absolute;left:90px;top:462.32000000000005px;width:1708.5px;height:28.74px;background:#f4f4f4"></div>
<div style="position:absolute;left:94.4px;top:469.10px;font-size:13px;line-height:13px;font-weight:normal;color:#222;white-space:pre;letter-spacing:0.202px">1</div>
<div style="position:absolute;left:185.4px;top:469.10px;font-size:13px;line-height:13px;font-weight:normal;color:#222;white-space:pre;letter-spacing:0.593px">01/03/20...</div>
<div style="position:absolute;left:266.34999999999997px;top:469.10px;font-size:13px;line-height:13px;font-weight:normal;color:#222;white-space:pre;letter-spacing:0.593px">01/03/20...</div>
<div style="position:absolute;left:347.29999999999995px;top:469.10px;font-size:13px;line-height:13px;font-weight:normal;color:#222;white-space:pre;letter-spacing:0.593px">01/12/20...</div>
<div style="position:absolute;right:1307.236772596154px;top:469.10px;font-size:13px;line-height:13px;font-weight:normal;color:#222;white-space:pre;text-align:right;letter-spacing:0.263px">2.000.000,...</div>
<div style="position:absolute;right:1220.1581921875px;top:469.10px;font-size:13px;line-height:13px;font-weight:normal;color:#222;white-space:pre;text-align:right;letter-spacing:0.292px">0,00</div>
<div style="position:absolute;left:599.25px;top:469.10px;font-size:13px;line-height:13px;font-weight:normal;color:#222;white-space:pre;letter-spacing:0.210px">100.000...</div>
<div style="position:absolute;right:1058.2581921875px;top:469.10px;font-size:13px;line-height:13px;font-weight:normal;color:#222;white-space:pre;text-align:right;letter-spacing:0.292px">3.000,00</div>
<div style="position:absolute;right:977.3081921875px;top:469.10px;font-size:13px;line-height:13px;font-weight:normal;color:#222;white-space:pre;text-align:right;letter-spacing:0.292px">0,00</div>
<div style="position:absolute;right:896.3581921875px;top:469.10px;font-size:13px;line-height:13px;font-weight:normal;color:#222;white-space:pre;text-align:right;letter-spacing:0.292px">0,00</div>
<div style="position:absolute;left:923.0500000000001px;top:469.10px;font-size:13px;line-height:13px;font-weight:normal;color:#222;white-space:pre;letter-spacing:0.210px">103.000...</div>
<div style="position:absolute;left:994.9px;top:469.10px;font-size:13px;line-height:13px;font-weight:normal;color:#222;white-space:pre;letter-spacing:0.247px">0,000000</div>
<div style="position:absolute;left:1075.8500000000001px;top:469.10px;font-size:13px;line-height:13px;font-weight:normal;color:#222;white-space:pre;letter-spacing:0.247px">2,000000</div>
<div style="position:absolute;left:1156.8000000000002px;top:469.10px;font-size:13px;line-height:13px;font-weight:normal;color:#222;white-space:pre;letter-spacing:-1.098px">EUR</div>
<div style="position:absolute;left:1318.7px;top:469.10px;font-size:13px;line-height:13px;font-weight:normal;color:#222;white-space:pre;letter-spacing:0.202px">30</div>
<div style="position:absolute;left:1399.65px;top:469.10px;font-size:13px;line-height:13px;font-weight:normal;color:#222;white-space:pre;letter-spacing:0.593px">01/03/20...</div>
<div style="position:absolute;right:248.75819218749984px;top:469.10px;font-size:13px;line-height:13px;font-weight:normal;color:#222;white-space:pre;text-align:right;letter-spacing:0.292px">0,00</div>
<div style="position:absolute;right:167.8081921874998px;top:469.10px;font-size:13px;line-height:13px;font-weight:normal;color:#222;white-space:pre;text-align:right;letter-spacing:0.292px">0,00</div>
<div style="position:absolute;left:1642.5000000000002px;top:469.10px;font-size:13px;line-height:13px;font-weight:normal;color:#222;white-space:pre;letter-spacing:0.593px">06/06/20...</div>
<svg style="position:absolute;left:1236.5px;top:468.6px;" width="15" height="13" viewBox="0 0 15 13"><path d="M1.3 6.8 L5 10.5 L13.2 2" fill="none" stroke="#111" stroke-width="3.1"/></svg>
<div style="position:absolute;left:90px;top:490.56px;width:1708.5px;height:28.74px;background:#fff"></div>
<div style="position:absolute;left:94.4px;top:497.20px;font-size:13px;line-height:13px;font-weight:normal;color:#222;white-space:pre;letter-spacing:0.202px">1</div>
<div style="position:absolute;left:185.4px;top:497.20px;font-size:13px;line-height:13px;font-weight:normal;color:#222;white-space:pre;letter-spacing:0.593px">01/04/20...</div>
<div style="position:absolute;left:266.34999999999997px;top:497.20px;font-size:13px;line-height:13px;font-weight:normal;color:#222;white-space:pre;letter-spacing:0.593px">01/04/20...</div>
<div style="position:absolute;left:347.29999999999995px;top:497.20px;font-size:13px;line-height:13px;font-weight:normal;color:#222;white-space:pre;letter-spacing:0.593px">01/12/20...</div>
<div style="position:absolute;right:1307.236772596154px;top:497.20px;font-size:13px;line-height:13px;font-weight:normal;color:#222;white-space:pre;text-align:right;letter-spacing:0.263px">2.000.000,...</div>
<div style="position:absolute;right:1220.1581921875px;top:497.20px;font-size:13px;line-height:13px;font-weight:normal;color:#222;white-space:pre;text-align:right;letter-spacing:0.292px">0,00</div>
<div style="position:absolute;left:599.25px;top:497.20px;font-size:13px;line-height:13px;font-weight:normal;color:#222;white-space:pre;letter-spacing:0.210px">100.000...</div>
<div style="position:absolute;right:1058.2581921875px;top:497.20px;font-size:13px;line-height:13px;font-weight:normal;color:#222;white-space:pre;text-align:right;letter-spacing:0.292px">2.833,33</div>
<div style="position:absolute;right:977.3081921875px;top:497.20px;font-size:13px;line-height:13px;font-weight:normal;color:#222;white-space:pre;text-align:right;letter-spacing:0.292px">0,00</div>
<div style="position:absolute;right:896.3581921875px;top:497.20px;font-size:13px;line-height:13px;font-weight:normal;color:#222;white-space:pre;text-align:right;letter-spacing:0.292px">0,00</div>
<div style="position:absolute;left:923.0500000000001px;top:497.20px;font-size:13px;line-height:13px;font-weight:normal;color:#222;white-space:pre;letter-spacing:0.210px">102.833...</div>
<div style="position:absolute;left:994.9px;top:497.20px;font-size:13px;line-height:13px;font-weight:normal;color:#222;white-space:pre;letter-spacing:0.247px">0,000000</div>
<div style="position:absolute;left:1075.8500000000001px;top:497.20px;font-size:13px;line-height:13px;font-weight:normal;color:#222;white-space:pre;letter-spacing:0.247px">2,000000</div>
<div style="position:absolute;left:1156.8000000000002px;top:497.20px;font-size:13px;line-height:13px;font-weight:normal;color:#222;white-space:pre;letter-spacing:-1.098px">EUR</div>
<div style="position:absolute;left:1318.7px;top:497.20px;font-size:13px;line-height:13px;font-weight:normal;color:#222;white-space:pre;letter-spacing:0.202px">30</div>
<div style="position:absolute;left:1399.65px;top:497.20px;font-size:13px;line-height:13px;font-weight:normal;color:#222;white-space:pre;letter-spacing:0.593px">01/04/20...</div>
<div style="position:absolute;right:248.75819218749984px;top:497.20px;font-size:13px;line-height:13px;font-weight:normal;color:#222;white-space:pre;text-align:right;letter-spacing:0.292px">0,00</div>
<div style="position:absolute;right:167.8081921874998px;top:497.20px;font-size:13px;line-height:13px;font-weight:normal;color:#222;white-space:pre;text-align:right;letter-spacing:0.292px">0,00</div>
<div style="position:absolute;left:1642.5000000000002px;top:497.20px;font-size:13px;line-height:13px;font-weight:normal;color:#222;white-space:pre;letter-spacing:0.593px">06/06/20...</div>
<svg style="position:absolute;left:1236.5px;top:496.70000000000005px;" width="15" height="13" viewBox="0 0 15 13"><path d="M1.3 6.8 L5 10.5 L13.2 2" fill="none" stroke="#111" stroke-width="3.1"/></svg>
<div style="position:absolute;left:90px;top:518.8px;width:1708.5px;height:28.74px;background:#f4f4f4"></div>
<div style="position:absolute;left:94.4px;top:525.30px;font-size:13px;line-height:13px;font-weight:normal;color:#222;white-space:pre;letter-spacing:0.202px">1</div>
<div style="position:absolute;left:185.4px;top:525.30px;font-size:13px;line-height:13px;font-weight:normal;color:#222;white-space:pre;letter-spacing:0.593px">01/05/20...</div>
<div style="position:absolute;left:266.34999999999997px;top:525.30px;font-size:13px;line-height:13px;font-weight:normal;color:#222;white-space:pre;letter-spacing:0.593px">01/05/20...</div>
<div style="position:absolute;left:347.29999999999995px;top:525.30px;font-size:13px;line-height:13px;font-weight:normal;color:#222;white-space:pre;letter-spacing:0.593px">01/12/20...</div>
<div style="position:absolute;right:1307.236772596154px;top:525.30px;font-size:13px;line-height:13px;font-weight:normal;color:#222;white-space:pre;text-align:right;letter-spacing:0.263px">2.000.000,...</div>
<div style="position:absolute;right:1220.1581921875px;top:525.30px;font-size:13px;line-height:13px;font-weight:normal;color:#222;white-space:pre;text-align:right;letter-spacing:0.292px">0,00</div>
<div style="position:absolute;left:599.25px;top:525.30px;font-size:13px;line-height:13px;font-weight:normal;color:#222;white-space:pre;letter-spacing:0.210px">100.000...</div>
<div style="position:absolute;right:1058.2581921875px;top:525.30px;font-size:13px;line-height:13px;font-weight:normal;color:#222;white-space:pre;text-align:right;letter-spacing:0.292px">2.666,67</div>
<div style="position:absolute;right:977.3081921875px;top:525.30px;font-size:13px;line-height:13px;font-weight:normal;color:#222;white-space:pre;text-align:right;letter-spacing:0.292px">0,00</div>
<div style="position:absolute;right:896.3581921875px;top:525.30px;font-size:13px;line-height:13px;font-weight:normal;color:#222;white-space:pre;text-align:right;letter-spacing:0.292px">0,00</div>
<div style="position:absolute;left:923.0500000000001px;top:525.30px;font-size:13px;line-height:13px;font-weight:normal;color:#222;white-space:pre;letter-spacing:0.210px">102.666...</div>
<div style="position:absolute;left:994.9px;top:525.30px;font-size:13px;line-height:13px;font-weight:normal;color:#222;white-space:pre;letter-spacing:0.247px">0,000000</div>
<div style="position:absolute;left:1075.8500000000001px;top:525.30px;font-size:13px;line-height:13px;font-weight:normal;color:#222;white-space:pre;letter-spacing:0.247px">2,000000</div>
<div style="position:absolute;left:1156.8000000000002px;top:525.30px;font-size:13px;line-height:13px;font-weight:normal;color:#222;white-space:pre;letter-spacing:-1.098px">EUR</div>
<div style="position:absolute;left:1318.7px;top:525.30px;font-size:13px;line-height:13px;font-weight:normal;color:#222;white-space:pre;letter-spacing:0.202px">30</div>
<div style="position:absolute;left:1399.65px;top:525.30px;font-size:13px;line-height:13px;font-weight:normal;color:#222;white-space:pre;letter-spacing:0.593px">01/05/20...</div>
<div style="position:absolute;right:248.75819218749984px;top:525.30px;font-size:13px;line-height:13px;font-weight:normal;color:#222;white-space:pre;text-align:right;letter-spacing:0.292px">0,00</div>
<div style="position:absolute;right:167.8081921874998px;top:525.30px;font-size:13px;line-height:13px;font-weight:normal;color:#222;white-space:pre;text-align:right;letter-spacing:0.292px">0,00</div>
<div style="position:absolute;left:1642.5000000000002px;top:525.30px;font-size:13px;line-height:13px;font-weight:normal;color:#222;white-space:pre;letter-spacing:0.593px">06/06/20...</div>
<svg style="position:absolute;left:1236.5px;top:524.8px;" width="15" height="13" viewBox="0 0 15 13"><path d="M1.3 6.8 L5 10.5 L13.2 2" fill="none" stroke="#111" stroke-width="3.1"/></svg>
<div style="position:absolute;left:90px;top:547.04px;width:1708.5px;height:28.74px;background:#fff"></div>
<div style="position:absolute;left:94.4px;top:553.40px;font-size:13px;line-height:13px;font-weight:normal;color:#222;white-space:pre;letter-spacing:0.202px">1</div>
<div style="position:absolute;left:185.4px;top:553.40px;font-size:13px;line-height:13px;font-weight:normal;color:#222;white-space:pre;letter-spacing:0.593px">01/06/20...</div>
<div style="position:absolute;left:266.34999999999997px;top:553.40px;font-size:13px;line-height:13px;font-weight:normal;color:#222;white-space:pre;letter-spacing:0.593px">01/06/20...</div>
<div style="position:absolute;left:347.29999999999995px;top:553.40px;font-size:13px;line-height:13px;font-weight:normal;color:#222;white-space:pre;letter-spacing:0.593px">01/12/20...</div>
<div style="position:absolute;right:1307.236772596154px;top:553.40px;font-size:13px;line-height:13px;font-weight:normal;color:#222;white-space:pre;text-align:right;letter-spacing:0.263px">2.000.000,...</div>
<div style="position:absolute;right:1220.1581921875px;top:553.40px;font-size:13px;line-height:13px;font-weight:normal;color:#222;white-space:pre;text-align:right;letter-spacing:0.292px">0,00</div>
<div style="position:absolute;left:599.25px;top:553.40px;font-size:13px;line-height:13px;font-weight:normal;color:#222;white-space:pre;letter-spacing:0.210px">100.000...</div>
<div style="position:absolute;right:1058.2581921875px;top:553.40px;font-size:13px;line-height:13px;font-weight:normal;color:#222;white-space:pre;text-align:right;letter-spacing:0.292px">2.500,00</div>
<div style="position:absolute;right:977.3081921875px;top:553.40px;font-size:13px;line-height:13px;font-weight:normal;color:#222;white-space:pre;text-align:right;letter-spacing:0.292px">0,00</div>
<div style="position:absolute;right:896.3581921875px;top:553.40px;font-size:13px;line-height:13px;font-weight:normal;color:#222;white-space:pre;text-align:right;letter-spacing:0.292px">0,00</div>
<div style="position:absolute;left:923.0500000000001px;top:553.40px;font-size:13px;line-height:13px;font-weight:normal;color:#222;white-space:pre;letter-spacing:0.210px">102.500...</div>
<div style="position:absolute;left:994.9px;top:553.40px;font-size:13px;line-height:13px;font-weight:normal;color:#222;white-space:pre;letter-spacing:0.247px">0,000000</div>
<div style="position:absolute;left:1075.8500000000001px;top:553.40px;font-size:13px;line-height:13px;font-weight:normal;color:#222;white-space:pre;letter-spacing:0.247px">2,000000</div>
<div style="position:absolute;left:1156.8000000000002px;top:553.40px;font-size:13px;line-height:13px;font-weight:normal;color:#222;white-space:pre;letter-spacing:-1.098px">EUR</div>
<div style="position:absolute;left:1318.7px;top:553.40px;font-size:13px;line-height:13px;font-weight:normal;color:#222;white-space:pre;letter-spacing:0.202px">30</div>
<div style="position:absolute;left:1399.65px;top:553.40px;font-size:13px;line-height:13px;font-weight:normal;color:#222;white-space:pre;letter-spacing:0.593px">01/06/20...</div>
<div style="position:absolute;right:248.75819218749984px;top:553.40px;font-size:13px;line-height:13px;font-weight:normal;color:#222;white-space:pre;text-align:right;letter-spacing:0.292px">0,00</div>
<div style="position:absolute;right:167.8081921874998px;top:553.40px;font-size:13px;line-height:13px;font-weight:normal;color:#222;white-space:pre;text-align:right;letter-spacing:0.292px">0,00</div>
<div style="position:absolute;left:1642.5000000000002px;top:553.40px;font-size:13px;line-height:13px;font-weight:normal;color:#222;white-space:pre;letter-spacing:0.593px">06/06/20...</div>
<svg style="position:absolute;left:1236.5px;top:552.9000000000001px;" width="15" height="13" viewBox="0 0 15 13"><path d="M1.3 6.8 L5 10.5 L13.2 2" fill="none" stroke="#111" stroke-width="3.1"/></svg>
<div style="position:absolute;left:90px;top:575.28px;width:1708.5px;height:28.74px;background:#f4f4f4"></div>
<div style="position:absolute;left:94.4px;top:581.50px;font-size:13px;line-height:13px;font-weight:normal;color:#222;white-space:pre;letter-spacing:0.202px">1</div>
<div style="position:absolute;left:185.4px;top:581.50px;font-size:13px;line-height:13px;font-weight:normal;color:#222;white-space:pre;letter-spacing:0.593px">01/07/20...</div>
<div style="position:absolute;left:266.34999999999997px;top:581.50px;font-size:13px;line-height:13px;font-weight:normal;color:#222;white-space:pre;letter-spacing:0.593px">01/07/20...</div>
<div style="position:absolute;left:347.29999999999995px;top:581.50px;font-size:13px;line-height:13px;font-weight:normal;color:#222;white-space:pre;letter-spacing:0.593px">01/12/20...</div>
<div style="position:absolute;right:1307.236772596154px;top:581.50px;font-size:13px;line-height:13px;font-weight:normal;color:#222;white-space:pre;text-align:right;letter-spacing:0.263px">2.000.000,...</div>
<div style="position:absolute;right:1220.1581921875px;top:581.50px;font-size:13px;line-height:13px;font-weight:normal;color:#222;white-space:pre;text-align:right;letter-spacing:0.292px">0,00</div>
<div style="position:absolute;left:599.25px;top:581.50px;font-size:13px;line-height:13px;font-weight:normal;color:#222;white-space:pre;letter-spacing:0.210px">100.000...</div>
<div style="position:absolute;right:1058.2581921875px;top:581.50px;font-size:13px;line-height:13px;font-weight:normal;color:#222;white-space:pre;text-align:right;letter-spacing:0.292px">2.333,33</div>
<div style="position:absolute;right:977.3081921875px;top:581.50px;font-size:13px;line-height:13px;font-weight:normal;color:#222;white-space:pre;text-align:right;letter-spacing:0.292px">0,00</div>
<div style="position:absolute;right:896.3581921875px;top:581.50px;font-size:13px;line-height:13px;font-weight:normal;color:#222;white-space:pre;text-align:right;letter-spacing:0.292px">0,00</div>
<div style="position:absolute;left:923.0500000000001px;top:581.50px;font-size:13px;line-height:13px;font-weight:normal;color:#222;white-space:pre;letter-spacing:0.210px">102.333...</div>
<div style="position:absolute;left:994.9px;top:581.50px;font-size:13px;line-height:13px;font-weight:normal;color:#222;white-space:pre;letter-spacing:0.247px">0,000000</div>
<div style="position:absolute;left:1075.8500000000001px;top:581.50px;font-size:13px;line-height:13px;font-weight:normal;color:#222;white-space:pre;letter-spacing:0.247px">2,000000</div>
<div style="position:absolute;left:1156.8000000000002px;top:581.50px;font-size:13px;line-height:13px;font-weight:normal;color:#222;white-space:pre;letter-spacing:-1.098px">EUR</div>
<div style="position:absolute;left:1318.7px;top:581.50px;font-size:13px;line-height:13px;font-weight:normal;color:#222;white-space:pre;letter-spacing:0.202px">30</div>
<div style="position:absolute;left:1399.65px;top:581.50px;font-size:13px;line-height:13px;font-weight:normal;color:#222;white-space:pre;letter-spacing:0.593px">01/07/20...</div>
<div style="position:absolute;right:248.75819218749984px;top:581.50px;font-size:13px;line-height:13px;font-weight:normal;color:#222;white-space:pre;text-align:right;letter-spacing:0.292px">0,00</div>
<div style="position:absolute;right:167.8081921874998px;top:581.50px;font-size:13px;line-height:13px;font-weight:normal;color:#222;white-space:pre;text-align:right;letter-spacing:0.292px">0,00</div>
<div style="position:absolute;left:1642.5000000000002px;top:581.50px;font-size:13px;line-height:13px;font-weight:normal;color:#222;white-space:pre;letter-spacing:0.593px">06/06/20...</div>
<svg style="position:absolute;left:1236.5px;top:581.0px;" width="15" height="13" viewBox="0 0 15 13"><path d="M1.3 6.8 L5 10.5 L13.2 2" fill="none" stroke="#111" stroke-width="3.1"/></svg>
<div style="position:absolute;left:90px;top:603.52px;width:1708.5px;height:28.74px;background:#fff"></div>
<div style="position:absolute;left:94.4px;top:609.60px;font-size:13px;line-height:13px;font-weight:normal;color:#222;white-space:pre;letter-spacing:0.202px">1</div>
<div style="position:absolute;left:185.4px;top:609.60px;font-size:13px;line-height:13px;font-weight:normal;color:#222;white-space:pre;letter-spacing:0.593px">01/08/20...</div>
<div style="position:absolute;left:266.34999999999997px;top:609.60px;font-size:13px;line-height:13px;font-weight:normal;color:#222;white-space:pre;letter-spacing:0.593px">01/08/20...</div>
<div style="position:absolute;left:347.29999999999995px;top:609.60px;font-size:13px;line-height:13px;font-weight:normal;color:#222;white-space:pre;letter-spacing:0.593px">01/12/20...</div>
<div style="position:absolute;right:1307.236772596154px;top:609.60px;font-size:13px;line-height:13px;font-weight:normal;color:#222;white-space:pre;text-align:right;letter-spacing:0.263px">2.000.000,...</div>
<div style="position:absolute;right:1220.1581921875px;top:609.60px;font-size:13px;line-height:13px;font-weight:normal;color:#222;white-space:pre;text-align:right;letter-spacing:0.292px">0,00</div>
<div style="position:absolute;left:599.25px;top:609.60px;font-size:13px;line-height:13px;font-weight:normal;color:#222;white-space:pre;letter-spacing:0.210px">100.000...</div>
<div style="position:absolute;right:1058.2581921875px;top:609.60px;font-size:13px;line-height:13px;font-weight:normal;color:#222;white-space:pre;text-align:right;letter-spacing:0.292px">2.166,67</div>
<div style="position:absolute;right:977.3081921875px;top:609.60px;font-size:13px;line-height:13px;font-weight:normal;color:#222;white-space:pre;text-align:right;letter-spacing:0.292px">0,00</div>
<div style="position:absolute;right:896.3581921875px;top:609.60px;font-size:13px;line-height:13px;font-weight:normal;color:#222;white-space:pre;text-align:right;letter-spacing:0.292px">0,00</div>
<div style="position:absolute;left:923.0500000000001px;top:609.60px;font-size:13px;line-height:13px;font-weight:normal;color:#222;white-space:pre;letter-spacing:0.210px">102.166...</div>
<div style="position:absolute;left:994.9px;top:609.60px;font-size:13px;line-height:13px;font-weight:normal;color:#222;white-space:pre;letter-spacing:0.247px">0,000000</div>
<div style="position:absolute;left:1075.8500000000001px;top:609.60px;font-size:13px;line-height:13px;font-weight:normal;color:#222;white-space:pre;letter-spacing:0.247px">2,000000</div>
<div style="position:absolute;left:1156.8000000000002px;top:609.60px;font-size:13px;line-height:13px;font-weight:normal;color:#222;white-space:pre;letter-spacing:-1.098px">EUR</div>
<div style="position:absolute;left:1318.7px;top:609.60px;font-size:13px;line-height:13px;font-weight:normal;color:#222;white-space:pre;letter-spacing:0.202px">30</div>
<div style="position:absolute;left:1399.65px;top:609.60px;font-size:13px;line-height:13px;font-weight:normal;color:#222;white-space:pre;letter-spacing:0.593px">01/08/20...</div>
<div style="position:absolute;right:248.75819218749984px;top:609.60px;font-size:13px;line-height:13px;font-weight:normal;color:#222;white-space:pre;text-align:right;letter-spacing:0.292px">0,00</div>
<div style="position:absolute;right:167.8081921874998px;top:609.60px;font-size:13px;line-height:13px;font-weight:normal;color:#222;white-space:pre;text-align:right;letter-spacing:0.292px">0,00</div>
<div style="position:absolute;left:1642.5000000000002px;top:609.60px;font-size:13px;line-height:13px;font-weight:normal;color:#222;white-space:pre;letter-spacing:0.593px">06/06/20...</div>
<svg style="position:absolute;left:1236.5px;top:609.1px;" width="15" height="13" viewBox="0 0 15 13"><path d="M1.3 6.8 L5 10.5 L13.2 2" fill="none" stroke="#111" stroke-width="3.1"/></svg>
<div style="position:absolute;left:90px;top:631.76px;width:1708.5px;height:28.74px;background:#f4f4f4"></div>
<div style="position:absolute;left:94.4px;top:637.70px;font-size:13px;line-height:13px;font-weight:normal;color:#222;white-space:pre;letter-spacing:0.202px">1</div>
<div style="position:absolute;left:185.4px;top:637.70px;font-size:13px;line-height:13px;font-weight:normal;color:#222;white-space:pre;letter-spacing:0.593px">01/09/20...</div>
<div style="position:absolute;left:266.34999999999997px;top:637.70px;font-size:13px;line-height:13px;font-weight:normal;color:#222;white-space:pre;letter-spacing:0.593px">01/09/20...</div>
<div style="position:absolute;left:347.29999999999995px;top:637.70px;font-size:13px;line-height:13px;font-weight:normal;color:#222;white-space:pre;letter-spacing:0.593px">01/12/20...</div>
<div style="position:absolute;right:1307.236772596154px;top:637.70px;font-size:13px;line-height:13px;font-weight:normal;color:#222;white-space:pre;text-align:right;letter-spacing:0.263px">2.000.000,...</div>
<div style="position:absolute;right:1220.1581921875px;top:637.70px;font-size:13px;line-height:13px;font-weight:normal;color:#222;white-space:pre;text-align:right;letter-spacing:0.292px">0,00</div>
<div style="position:absolute;left:599.25px;top:637.70px;font-size:13px;line-height:13px;font-weight:normal;color:#222;white-space:pre;letter-spacing:0.210px">100.000...</div>
<div style="position:absolute;right:1058.2581921875px;top:637.70px;font-size:13px;line-height:13px;font-weight:normal;color:#222;white-space:pre;text-align:right;letter-spacing:0.292px">2.000,00</div>
<div style="position:absolute;right:977.3081921875px;top:637.70px;font-size:13px;line-height:13px;font-weight:normal;color:#222;white-space:pre;text-align:right;letter-spacing:0.292px">0,00</div>
<div style="position:absolute;right:896.3581921875px;top:637.70px;font-size:13px;line-height:13px;font-weight:normal;color:#222;white-space:pre;text-align:right;letter-spacing:0.292px">0,00</div>
<div style="position:absolute;left:923.0500000000001px;top:637.70px;font-size:13px;line-height:13px;font-weight:normal;color:#222;white-space:pre;letter-spacing:0.210px">102.000...</div>
<div style="position:absolute;left:994.9px;top:637.70px;font-size:13px;line-height:13px;font-weight:normal;color:#222;white-space:pre;letter-spacing:0.247px">0,000000</div>
<div style="position:absolute;left:1075.8500000000001px;top:637.70px;font-size:13px;line-height:13px;font-weight:normal;color:#222;white-space:pre;letter-spacing:0.247px">2,000000</div>
<div style="position:absolute;left:1156.8000000000002px;top:637.70px;font-size:13px;line-height:13px;font-weight:normal;color:#222;white-space:pre;letter-spacing:-1.098px">EUR</div>
<div style="position:absolute;left:1318.7px;top:637.70px;font-size:13px;line-height:13px;font-weight:normal;color:#222;white-space:pre;letter-spacing:0.202px">30</div>
<div style="position:absolute;left:1399.65px;top:637.70px;font-size:13px;line-height:13px;font-weight:normal;color:#222;white-space:pre;letter-spacing:0.593px">01/09/20...</div>
<div style="position:absolute;right:248.75819218749984px;top:637.70px;font-size:13px;line-height:13px;font-weight:normal;color:#222;white-space:pre;text-align:right;letter-spacing:0.292px">0,00</div>
<div style="position:absolute;right:167.8081921874998px;top:637.70px;font-size:13px;line-height:13px;font-weight:normal;color:#222;white-space:pre;text-align:right;letter-spacing:0.292px">0,00</div>
<div style="position:absolute;left:1642.5000000000002px;top:637.70px;font-size:13px;line-height:13px;font-weight:normal;color:#222;white-space:pre;letter-spacing:0.593px">06/06/20...</div>
<svg style="position:absolute;left:1236.5px;top:637.2px;" width="15" height="13" viewBox="0 0 15 13"><path d="M1.3 6.8 L5 10.5 L13.2 2" fill="none" stroke="#111" stroke-width="3.1"/></svg>
<div style="position:absolute;left:1799px;top:348px;width:1px;height:312px;background:#dde3e6"></div>
<div style="position:absolute;left:90px;top:660px;width:1710px;height:38px;background:#dfe0dc"></div>
<svg style="position:absolute;left:108px;top:678px;" width="10" height="10" viewBox="0 0 10 10"><path d="M1.8 1.2 L1.8 8.6" stroke="#b5b5b5" stroke-width="1.4"/><path d="M8.8 1.2 L2.8 4.9 L8.8 8.6 Z" fill="#b5b5b5"/></svg>
<svg style="position:absolute;left:137px;top:678px;" width="10" height="10" viewBox="0 0 10 10"><path d="M7.2 1.3 L1.2 4.9 L7.2 8.5 Z" fill="#b5b5b5"/></svg>
<div style="position:absolute;left:155px;top:667px;width:28px;height:28.5px;background:#b9c3c6"></div>
<div style="position:absolute;left:-31px;width:400px;top:675.00px;font-size:13px;line-height:13px;font-weight:normal;color:#345;white-space:pre;text-align:center;">1</div>
<div style="position:absolute;left:-3px;width:400px;top:675.00px;font-size:13px;line-height:13px;font-weight:normal;color:#345;white-space:pre;text-align:center;">2</div>
<svg style="position:absolute;left:221px;top:678px;" width="10" height="10" viewBox="0 0 10 10"><path d="M1.2 1.3 L7.2 4.9 L1.2 8.5 Z" fill="#111"/></svg>
<svg style="position:absolute;left:247px;top:678px;" width="10" height="10" viewBox="0 0 10 10"><path d="M1.2 1.2 L7.2 4.9 L1.2 8.6 Z" fill="#111"/><path d="M7.9 1.2 L7.9 8.6" stroke="#111" stroke-width="1.4"/></svg>
<div style="position:absolute;left:281px;top:669px;width:63px;height:29px;background:#fff"></div>
<div style="position:absolute;left:289.2px;top:675.00px;font-size:13px;line-height:13px;font-weight:normal;color:#222;white-space:pre;">10</div>
<div style="position:absolute;left:352.4px;top:675.00px;font-size:13px;line-height:13px;font-weight:normal;color:#333;white-space:pre;">elementos por página</div>
<div style="position:absolute;left:1619.6px;top:675.00px;font-size:13px;line-height:13px;font-weight:normal;color:#222;white-space:pre;">elementos 1 - 10 de 15</div>
<svg style="position:absolute;left:1770px;top:674px;" width="16" height="16" viewBox="0 0 16 16"><path d="M12.3 4.5 A6 6 0 1 0 13.8 8.5" fill="none" stroke="#222" stroke-width="2"/><path d="M9.2 1.5 L14.2 1.8 L13.6 6.8 Z" fill="#222"/></svg>
<!-- menu -->
<div style="position:absolute;left:289px;top:104.3px;width:201.5px;height:578.7px;background:#fff;box-shadow:1px 2px 7px rgba(0,0,0,0.22);border:1px solid #d5dde1;box-sizing:border-box"></div>
<div style="position:absolute;left:309.5px;top:111.99px;font-size:11px;line-height:11px;font-weight:normal;color:#c2c2c2;white-space:pre;">Gestión</div>
<div style="position:absolute;left:296.2px;top:137.96px;font-size:12.8px;line-height:12.8px;font-weight:normal;color:#626262;white-space:pre;">Editar</div>
<div style="position:absolute;left:296.2px;top:170.26px;font-size:12.8px;line-height:12.8px;font-weight:normal;color:#626262;white-space:pre;">Ver</div>
<div style="position:absolute;left:296.2px;top:201.96px;font-size:12.8px;line-height:12.8px;font-weight:normal;color:#626262;white-space:pre;">Eliminar todos los comentarios</div>
<div style="position:absolute;left:296.2px;top:233.66px;font-size:12.8px;line-height:12.8px;font-weight:normal;color:#626262;white-space:pre;">Duplicar</div>
<div style="position:absolute;left:290.5px;top:255px;width:199px;height:1px;background:#e6e6e6"></div>
<div style="position:absolute;left:309.5px;top:261.69px;font-size:11px;line-height:11px;font-weight:normal;color:#c2c2c2;white-space:pre;">Gestionar</div>
<div style="position:absolute;left:296.2px;top:287.66px;font-size:12.8px;line-height:12.8px;font-weight:normal;color:#626262;white-space:pre;">Enviar flujos a Tesorería</div>
<div style="position:absolute;left:296.2px;top:319.54px;font-size:12.8px;line-height:12.8px;font-weight:normal;color:#626262;white-space:pre;">Anular envío de flujos a Tesorería</div>
<div style="position:absolute;left:296.2px;top:351.42px;font-size:12.8px;line-height:12.8px;font-weight:normal;color:#626262;white-space:pre;">Actualizar cotizaciones de divisa</div>
<div style="position:absolute;left:296.2px;top:383.30px;font-size:12.8px;line-height:12.8px;font-weight:normal;color:#626262;white-space:pre;">Actualizar tipos de interés</div>
<div style="position:absolute;left:296.2px;top:415.18px;font-size:12.8px;line-height:12.8px;font-weight:normal;color:#626262;white-space:pre;">Modificar a una fecha</div>
<div style="position:absolute;left:296.2px;top:447.06px;font-size:12.8px;line-height:12.8px;font-weight:normal;color:#626262;white-space:pre;">Reembolso anticip.</div>
<div style="position:absolute;left:296.2px;top:478.94px;font-size:12.8px;line-height:12.8px;font-weight:normal;color:#626262;white-space:pre;">Prórroga</div>
<div style="position:absolute;left:296.2px;top:510.82px;font-size:12.8px;line-height:12.8px;font-weight:normal;color:#626262;white-space:pre;">Cambiar participantes</div>
<div style="position:absolute;left:296.2px;top:542.70px;font-size:12.8px;line-height:12.8px;font-weight:normal;color:#626262;white-space:pre;">Cambiar divisa</div>
<div style="position:absolute;left:296.2px;top:574.58px;font-size:12.8px;line-height:12.8px;font-weight:normal;color:#626262;white-space:pre;">Cambiar el estado a Abierto</div>
<div style="position:absolute;left:296.2px;top:606.46px;font-size:12.8px;line-height:12.8px;font-weight:normal;color:#626262;white-space:pre;">Cambiar el estado a Resuelto</div>
<div style="position:absolute;left:290.5px;top:628.5px;width:199px;height:1px;background:#e6e6e6"></div>
<div style="position:absolute;left:309.5px;top:634.89px;font-size:11px;line-height:11px;font-weight:normal;color:#c2c2c2;white-space:pre;">Avisos</div>
<div style="position:absolute;left:296.2px;top:661.16px;font-size:12.8px;line-height:12.8px;font-weight:normal;color:#626262;white-space:pre;">Confirmar avisos</div>
<div style="position:absolute;left:287px;top:565.5px;width:196px;height:65px;box-sizing:border-box;border:4.5px solid #1fa84f"></div>
</body></html>
